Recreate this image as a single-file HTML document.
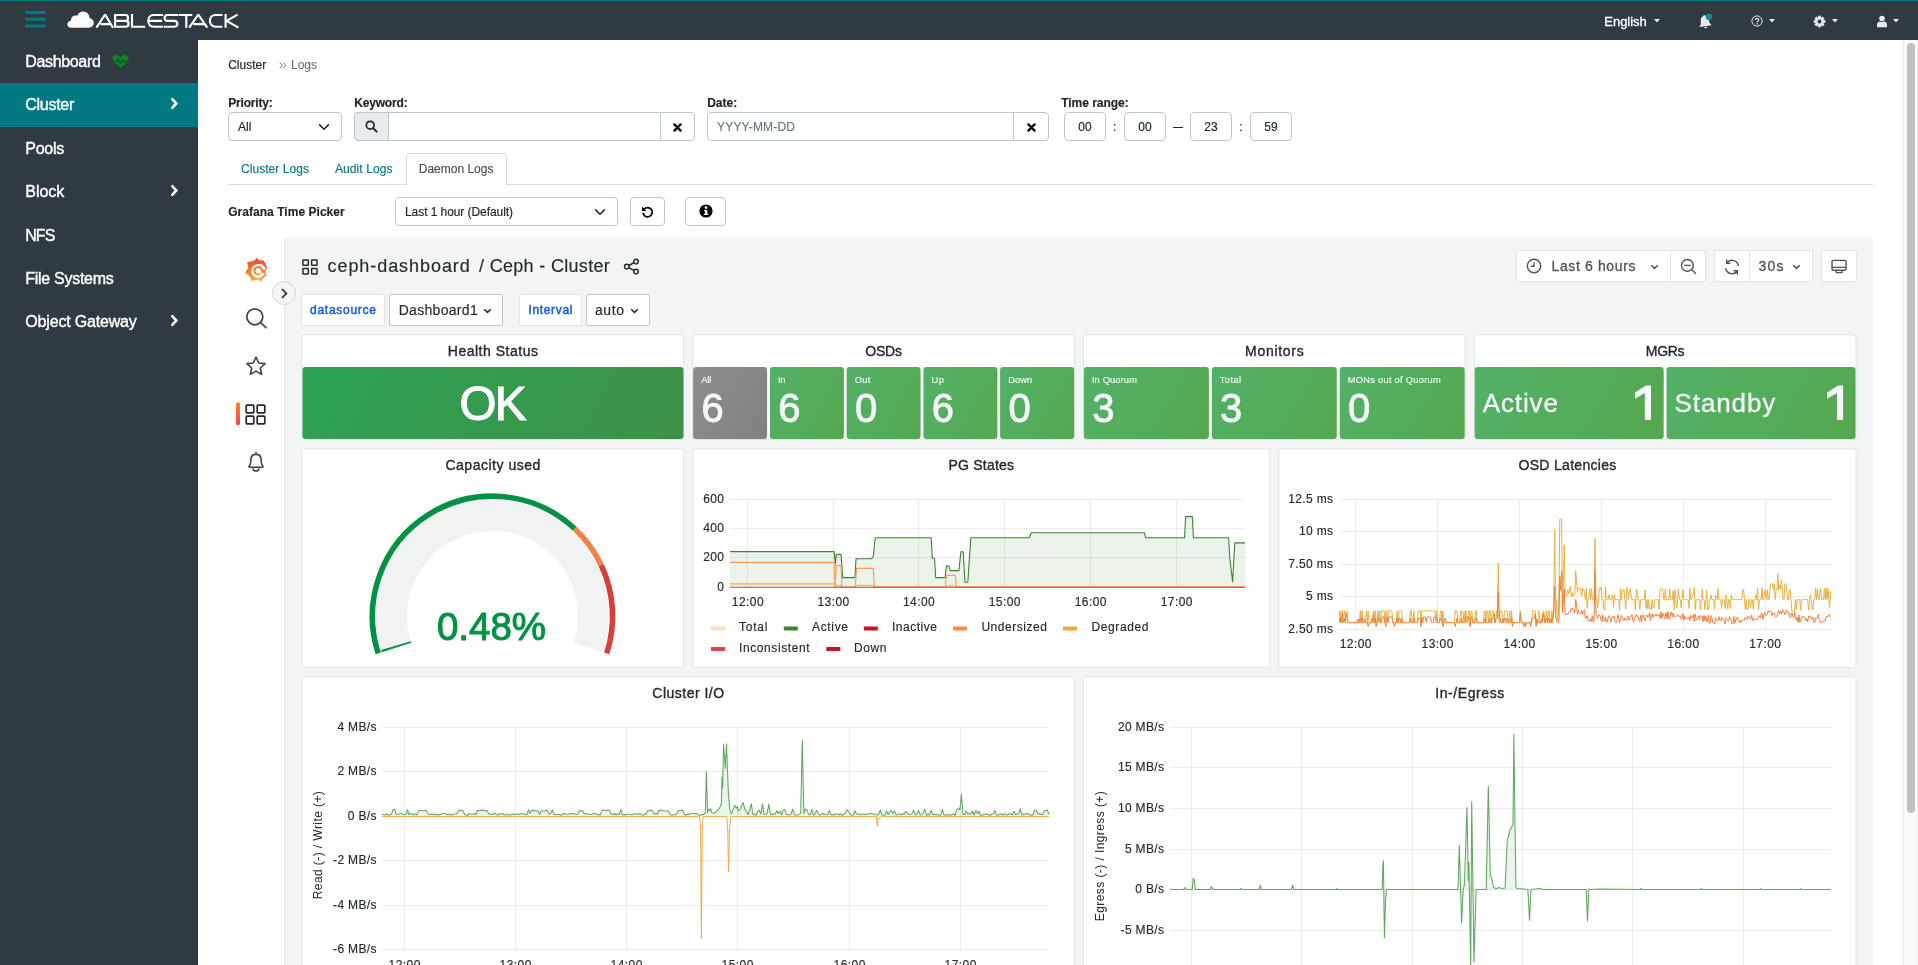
<!DOCTYPE html>
<html><head><meta charset="utf-8"><title>Ceph</title>
<style>
html,body{margin:0;padding:0;}
body{width:1918px;height:965px;overflow:hidden;position:relative;background:#fff;font-family:"Liberation Sans", sans-serif;}
div,svg{box-sizing:border-box;}
#root{position:absolute;left:0;top:0;width:1918px;height:965px;will-change:transform;}
</style></head><body><div id="root">
<div style="position:absolute;left:0px;top:0px;width:1918px;height:40px;background:#2f3a41;"></div>
<div style="position:absolute;left:0px;top:0px;width:1918px;height:1px;background:#007984;"></div>
<div style="position:absolute;left:25px;top:11px;width:21px;height:3.2px;background:#007984;border-radius:1px;"></div>
<div style="position:absolute;left:25px;top:17px;width:21px;height:3.2px;transform:translate(0.00px,0.70px);background:#007984;border-radius:1px;"></div>
<div style="position:absolute;left:25px;top:24px;width:21px;height:3.2px;transform:translate(0.00px,0.40px);background:#007984;border-radius:1px;"></div>
<svg style="position:absolute;left:66px;top:9px;" width="176" height="22" viewBox="0 0 176 22">
<path fill="#fff" d="M5.5 18.8 C2.6 18.8 1.4 16.9 1.4 15.2 C1.4 13.2 2.9 11.6 5 11.4 C5.1 8.6 7 6.6 9.6 6.6 C10.2 6.6 10.7 6.7 11.2 6.9 C12.1 4.3 14.3 2.6 17 2.6 C20.6 2.6 23.4 5.4 23.6 9 C26 9.6 27.8 11.6 27.8 14.1 C27.8 16.8 25.8 18.8 23 18.8 Z"/>
<g fill="none" stroke="#fff" stroke-width="2.15" stroke-linejoin="miter" stroke-linecap="butt">
<path stroke-linejoin="bevel" d="M30.4 18.7 L39.1 5.5 L47 18.7 M34.4 15.1 L44.4 15.1"/>
<path d="M49.1 6 L49.1 17.7 L59.5 17.7 C63.6 17.7 63.6 11.85 59.5 11.85 L49.1 11.85 M59.5 11.85 C62.9 11.85 62.9 6 59.5 6 L48 6"/>
<path d="M66 4.9 L66 17.7 L79.2 17.7"/>
<path d="M97 6 L87.6 6 C80.4 6 80.4 17.7 87.6 17.7 L97 17.7 M82.6 11.85 L96 11.85"/>
<path d="M112.4 6 L101.6 6 C97.6 6 97.6 11.85 101.6 11.85 L108.2 11.85 C112.4 11.85 112.4 17.7 108.2 17.7 L97.8 17.7"/>
<path d="M112.9 6 L126.3 6 M120.3 6 L120.3 18.8"/>
<path stroke-linejoin="bevel" d="M123.2 18.7 L132.3 5.5 L141.2 18.7 M127.4 15.1 L138.2 15.1"/>
<path d="M156.4 6 L149.6 6 C142 6 142 17.7 149.6 17.7 L156.4 17.7"/>
<path stroke-linejoin="bevel" d="M159.6 4.9 L159.6 18.8 M171.6 5.6 L160.6 11.9 L172.4 18.6"/>
</g></svg>
<div style="position:absolute;left:1604.30px;top:14.20px;line-height:15px;font-size:13px;color:#fff;letter-spacing:-0.023px;white-space:pre;-webkit-text-stroke:0.3px #fff;">English</div>
<svg style="position:absolute;left:1653.8px;top:18.8px;" width="6" height="4" viewBox="0 0 6 4"><path d="M0 0 L6 0 L3 3.4 Z" fill="#e6eaed"/></svg>
<svg style="position:absolute;left:1697px;top:14px;" width="16" height="16" viewBox="0 0 16 16"><g transform="rotate(-8 8 8)"><path fill="#e6eaed" d="M7.3 1.8 C7.3 1.2 7.8 .8 8.3 1 C8.7 1.1 8.9 1.5 8.9 1.9 C10.9 2.4 12 4.1 12 6.4 C12 9.2 12.7 10.5 13.9 11.5 L13.9 12.2 L2.1 12.2 L2.1 11.5 C3.3 10.5 4 9.2 4 6.4 C4 4.1 5.2 2.4 7.3 1.8 Z M6.5 12.9 L9.5 12.9 C9.5 13.8 8.8 14.4 8 14.4 C7.2 14.4 6.5 13.8 6.5 12.9 Z"/></g>
<circle cx="11.9" cy="2.7" r="3.2" fill="#0a8c9c"/></svg>
<svg style="position:absolute;left:1751px;top:15.2px;" width="12" height="12" viewBox="0 0 12 12"><circle cx="6" cy="6" r="5.1" fill="none" stroke="#e6eaed" stroke-width="1"/>
<path d="M4.4 4.9 C4.4 2.9 7.7 2.9 7.7 4.9 C7.7 6 6.1 6.1 6.1 7.4" fill="none" stroke="#e6eaed" stroke-width="1.15"/><rect x="5.5" y="8.2" width="1.2" height="1.2" fill="#e6eaed"/></svg>
<svg style="position:absolute;left:1768.8px;top:18.8px;" width="6" height="4" viewBox="0 0 6 4"><path d="M0 0 L6 0 L3 3.4 Z" fill="#e6eaed"/></svg>
<svg style="position:absolute;left:1813.4px;top:14.7px;" width="13" height="13" viewBox="0 0 13 13"><g transform="translate(6.5 6.5)"><circle r="3.2" fill="none" stroke="#e6eaed" stroke-width="2.5"/><rect x="-1.4" y="-5.8" width="2.8" height="2.8" fill="#e6eaed" transform="rotate(0)"/><rect x="-1.4" y="-5.8" width="2.8" height="2.8" fill="#e6eaed" transform="rotate(45)"/><rect x="-1.4" y="-5.8" width="2.8" height="2.8" fill="#e6eaed" transform="rotate(90)"/><rect x="-1.4" y="-5.8" width="2.8" height="2.8" fill="#e6eaed" transform="rotate(135)"/><rect x="-1.4" y="-5.8" width="2.8" height="2.8" fill="#e6eaed" transform="rotate(180)"/><rect x="-1.4" y="-5.8" width="2.8" height="2.8" fill="#e6eaed" transform="rotate(225)"/><rect x="-1.4" y="-5.8" width="2.8" height="2.8" fill="#e6eaed" transform="rotate(270)"/><rect x="-1.4" y="-5.8" width="2.8" height="2.8" fill="#e6eaed" transform="rotate(315)"/></g></svg>
<svg style="position:absolute;left:1831.6px;top:18.8px;" width="6" height="4" viewBox="0 0 6 4"><path d="M0 0 L6 0 L3 3.4 Z" fill="#e6eaed"/></svg>
<svg style="position:absolute;left:1876.4px;top:14.8px;" width="12" height="13" viewBox="0 0 12 13"><circle cx="6" cy="3.5" r="2.8" fill="#e6eaed"/><path d="M1 12.2 L1 9.6 C1 7.5 2.6 6.4 4.1 6.4 C5.2 7.2 6.8 7.2 7.9 6.4 C9.4 6.4 11 7.5 11 9.6 L11 12.2 Z" fill="#e6eaed"/></svg>
<svg style="position:absolute;left:1893.3px;top:18.8px;" width="6" height="4" viewBox="0 0 6 4"><path d="M0 0 L6 0 L3 3.4 Z" fill="#e6eaed"/></svg>
<div style="position:absolute;left:0px;top:40px;width:198px;height:925px;background:#2f3a41;"></div>
<div style="position:absolute;left:0px;top:83px;width:198px;height:44px;background:#007984;"></div>
<div style="position:absolute;left:25.30px;top:53.00px;line-height:17px;font-size:16px;color:#fff;letter-spacing:-0.348px;white-space:pre;-webkit-text-stroke:0.4px #fff;">Dashboard</div>
<div style="position:absolute;left:25.30px;top:96.00px;line-height:17px;font-size:16px;color:#fff;letter-spacing:-0.281px;white-space:pre;-webkit-text-stroke:0.4px #fff;">Cluster</div>
<svg style="position:absolute;left:170px;top:97px;" width="9" height="13" viewBox="0 0 9 13"><path d="M2.3 2.2 L6.3 6.5 L2.3 10.8" fill="none" stroke="#fff" stroke-width="2.6" stroke-linejoin="miter" stroke-linecap="round"/></svg>
<div style="position:absolute;left:25.30px;top:140.00px;line-height:17px;font-size:16px;color:#fff;letter-spacing:-0.258px;white-space:pre;-webkit-text-stroke:0.4px #fff;">Pools</div>
<div style="position:absolute;left:25.30px;top:183.00px;line-height:17px;font-size:16px;color:#fff;letter-spacing:-0.031px;white-space:pre;-webkit-text-stroke:0.4px #fff;">Block</div>
<svg style="position:absolute;left:170px;top:184px;" width="9" height="13" viewBox="0 0 9 13"><path d="M2.3 2.2 L6.3 6.5 L2.3 10.8" fill="none" stroke="#fff" stroke-width="2.6" stroke-linejoin="miter" stroke-linecap="round"/></svg>
<div style="position:absolute;left:25.30px;top:227.00px;line-height:17px;font-size:16px;color:#fff;letter-spacing:-1.000px;white-space:pre;-webkit-text-stroke:0.4px #fff;">NFS</div>
<div style="position:absolute;left:25.30px;top:270.00px;line-height:17px;font-size:16px;color:#fff;letter-spacing:-0.280px;white-space:pre;-webkit-text-stroke:0.4px #fff;">File Systems</div>
<div style="position:absolute;left:25.30px;top:313.00px;line-height:17px;font-size:16px;color:#fff;letter-spacing:-0.179px;white-space:pre;-webkit-text-stroke:0.4px #fff;">Object Gateway</div>
<svg style="position:absolute;left:170px;top:314px;" width="9" height="13" viewBox="0 0 9 13"><path d="M2.3 2.2 L6.3 6.5 L2.3 10.8" fill="none" stroke="#fff" stroke-width="2.6" stroke-linejoin="miter" stroke-linecap="round"/></svg>
<svg style="position:absolute;left:112px;top:54px;" width="17" height="15" viewBox="0 0 17 15"><path fill="#04891f" d="M8.5 14.3 L1.9 7.9 C-.6 5.3 .5 .9 4.3 .9 C6 .9 7.4 1.8 8.5 3.2 C9.6 1.8 11 .9 12.7 .9 C16.5 .9 17.6 5.3 15.1 7.9 Z"/>
<path d="M0 7.6 L4.8 7.6 L6.2 4.8 L8.2 10.4 L10.2 6.2 L11 7.6 L17 7.6" fill="none" stroke="#2f3a41" stroke-width="1.1"/></svg>
<div style="position:absolute;left:228.20px;top:58.00px;line-height:14px;font-size:12px;color:#212529;letter-spacing:-0.003px;white-space:pre;-webkit-text-stroke:0.15px #212529;">Cluster</div>
<svg style="position:absolute;left:278.5px;top:62px;" width="8" height="7" viewBox="0 0 8 7"><path d="M.8 .6 L3.4 3.4 L.8 6.2 M4.2 .6 L6.8 3.4 L4.2 6.2" fill="none" stroke="#6c757d" stroke-width="1"/></svg>
<div style="position:absolute;left:291.00px;top:58.00px;line-height:14px;font-size:12px;color:#6c757d;letter-spacing:-0.010px;white-space:pre;-webkit-text-stroke:0.15px #6c757d;">Logs</div>
<div style="position:absolute;left:228.20px;top:96.00px;line-height:14px;font-size:12px;font-weight:700;color:#212529;letter-spacing:-0.189px;white-space:pre;-webkit-text-stroke:0.15px #212529;">Priority:</div>
<div style="position:absolute;left:354.20px;top:96.00px;line-height:14px;font-size:12px;font-weight:700;color:#212529;letter-spacing:-0.170px;white-space:pre;-webkit-text-stroke:0.15px #212529;">Keyword:</div>
<div style="position:absolute;left:707.20px;top:96.00px;line-height:14px;font-size:12px;font-weight:700;color:#212529;letter-spacing:-0.004px;white-space:pre;-webkit-text-stroke:0.15px #212529;">Date:</div>
<div style="position:absolute;left:1061.20px;top:96.00px;line-height:14px;font-size:12px;font-weight:700;color:#212529;letter-spacing:-0.031px;white-space:pre;-webkit-text-stroke:0.15px #212529;">Time range:</div>
<div style="position:absolute;left:228px;top:112px;width:114px;height:29px;border:1px solid #bbc6d0;border-radius:4px;background:#fff;"></div>
<div style="position:absolute;left:238.00px;top:120.00px;line-height:14px;font-size:12px;color:#212529;white-space:pre;-webkit-text-stroke:0.15px #212529;">All</div>
<svg style="position:absolute;left:318px;top:123px;" width="12" height="8" viewBox="0 0 12 8"><path d="M1.2 1.4 L6 6.2 L10.8 1.4" fill="none" stroke="#212529" stroke-width="1.5"/></svg>
<div style="position:absolute;left:354px;top:112px;width:341px;height:29px;border:1px solid #bbc6d0;border-radius:4px;background:#fff;"></div>
<div style="position:absolute;left:354px;top:112px;width:35px;height:29px;border:1px solid #bbc6d0;border-radius:4px 0 0 4px;background:#e9ecef;"></div>
<div style="position:absolute;left:660px;top:112px;width:1px;height:29px;background:#bbc6d0;"></div>
<svg style="position:absolute;left:364.5px;top:120px;" width="13" height="13" viewBox="0 0 13 13"><circle cx="5.2" cy="5.2" r="3.9" fill="none" stroke="#212529" stroke-width="1.7"/><path d="M8.1 8.1 L11.6 11.6" stroke="#212529" stroke-width="2" stroke-linecap="round"/></svg>
<svg style="position:absolute;left:673px;top:122.5px;" width="9" height="9" viewBox="0 0 9 9"><path d="M1.4 1.4 L7.6 7.6 M7.6 1.4 L1.4 7.6" stroke="#000" stroke-width="2.3" stroke-linecap="round"/></svg>
<div style="position:absolute;left:707px;top:112px;width:342px;height:29px;border:1px solid #bbc6d0;border-radius:4px;background:#fff;"></div>
<div style="position:absolute;left:1013px;top:112px;width:1px;height:29px;background:#bbc6d0;"></div>
<div style="position:absolute;left:717.00px;top:120.00px;line-height:14px;font-size:12px;color:#6c757d;letter-spacing:0.196px;white-space:pre;-webkit-text-stroke:0.15px #6c757d;">YYYY-MM-DD</div>
<svg style="position:absolute;left:1026.7px;top:122.5px;" width="9" height="9" viewBox="0 0 9 9"><path d="M1.4 1.4 L7.6 7.6 M7.6 1.4 L1.4 7.6" stroke="#000" stroke-width="2.3" stroke-linecap="round"/></svg>
<div style="position:absolute;left:1064px;top:112px;width:42px;height:29px;border:1px solid #bbc6d0;border-radius:4px;background:#fff;"></div>
<div style="position:absolute;left:1078.32px;top:120.00px;line-height:14px;font-size:12px;color:#212529;white-space:pre;-webkit-text-stroke:0.15px #212529;">00</div>
<div style="position:absolute;left:1124px;top:112px;width:42px;height:29px;border:1px solid #bbc6d0;border-radius:4px;background:#fff;"></div>
<div style="position:absolute;left:1138.32px;top:120.00px;line-height:14px;font-size:12px;color:#212529;white-space:pre;-webkit-text-stroke:0.15px #212529;">00</div>
<div style="position:absolute;left:1190px;top:112px;width:42px;height:29px;border:1px solid #bbc6d0;border-radius:4px;background:#fff;"></div>
<div style="position:absolute;left:1204.32px;top:120.00px;line-height:14px;font-size:12px;color:#212529;white-space:pre;-webkit-text-stroke:0.15px #212529;">23</div>
<div style="position:absolute;left:1250px;top:112px;width:42px;height:29px;border:1px solid #bbc6d0;border-radius:4px;background:#fff;"></div>
<div style="position:absolute;left:1264.32px;top:120.00px;line-height:14px;font-size:12px;color:#212529;white-space:pre;-webkit-text-stroke:0.15px #212529;">59</div>
<div style="position:absolute;left:1113.03px;top:119.50px;line-height:14px;font-size:12px;color:#212529;white-space:pre;-webkit-text-stroke:0.15px #212529;">:</div>
<div style="position:absolute;left:1239.23px;top:119.50px;line-height:14px;font-size:12px;color:#212529;white-space:pre;-webkit-text-stroke:0.15px #212529;">:</div>
<div style="position:absolute;left:1173px;top:127px;width:10px;height:1px;background:#212529;"></div>
<div style="position:absolute;left:228px;top:184px;width:1645px;height:1px;background:#d5dde3;"></div>
<div style="position:absolute;left:241.00px;top:162.00px;line-height:14px;font-size:12px;color:#00778a;letter-spacing:0.057px;white-space:pre;-webkit-text-stroke:0.15px #00778a;">Cluster Logs</div>
<div style="position:absolute;left:335.00px;top:162.00px;line-height:14px;font-size:12px;color:#00778a;letter-spacing:0.087px;white-space:pre;-webkit-text-stroke:0.15px #00778a;">Audit Logs</div>
<div style="position:absolute;left:406px;top:153px;width:101px;height:32.5px;border:1px solid #d5dde3;border-bottom:none;border-radius:4px 4px 0 0;background:#fff;"></div>
<div style="position:absolute;left:418.80px;top:162.00px;line-height:14px;font-size:12px;color:#495057;letter-spacing:-0.012px;white-space:pre;-webkit-text-stroke:0.15px #495057;">Daemon Logs</div>
<div style="position:absolute;left:228.20px;top:204.80px;line-height:14px;font-size:12px;font-weight:700;color:#212529;letter-spacing:0.036px;white-space:pre;-webkit-text-stroke:0.15px #212529;">Grafana Time Picker</div>
<div style="position:absolute;left:395px;top:197px;width:223px;height:29px;border:1px solid #bbc6d0;border-radius:4px;background:#fff;"></div>
<div style="position:absolute;left:405.00px;top:205.00px;line-height:14px;font-size:12px;color:#212529;letter-spacing:-0.070px;white-space:pre;-webkit-text-stroke:0.15px #212529;">Last 1 hour (Default)</div>
<svg style="position:absolute;left:594.2px;top:207.8px;" width="12" height="8" viewBox="0 0 12 8"><path d="M1.2 1.4 L6 6.2 L10.8 1.4" fill="none" stroke="#212529" stroke-width="1.5"/></svg>
<div style="position:absolute;left:630px;top:197px;width:35px;height:29px;border:1px solid #bbc6d0;border-radius:4px;background:#fff;"></div>
<svg style="position:absolute;left:641px;top:205px;" width="13" height="13" viewBox="0 0 13 13"><path d="M3 4.3 A4.6 4.6 0 1 1 2 7.8" fill="none" stroke="#000" stroke-width="1.7"/><path d="M1 1.6 L1 6 L5.4 6 Z" fill="#000"/></svg>
<div style="position:absolute;left:685px;top:197px;width:41px;height:29px;border:1px solid #bbc6d0;border-radius:4px;background:#fff;"></div>
<svg style="position:absolute;left:698.6px;top:204.3px;" width="14" height="14" viewBox="0 0 14 14"><circle cx="7" cy="7" r="6.6" fill="#000"/><rect x="5.9" y="5.9" width="2.4" height="4.6" fill="#fff"/><rect x="5" y="5.9" width="2" height="1.2" fill="#fff"/><rect x="4.9" y="9.8" width="4.4" height="1.2" fill="#fff"/><circle cx="7" cy="3.6" r="1.35" fill="#fff"/></svg>
<div style="position:absolute;left:1903px;top:40px;width:15px;height:925px;background:#fafafa;border-left:1px solid #e8e8e8;border-right:1px solid #ededed;"></div>
<div style="position:absolute;left:1907px;top:43px;width:8px;height:770px;background:#c1c1c1;border-radius:4px;"></div>
<div style="position:absolute;left:284px;top:238px;width:1589px;height:727px;background:#f3f5f5;border-left:1px solid #e6e8e9;"></div>
<svg style="position:absolute;left:240px;top:254px;" width="32" height="32" viewBox="0 0 32 32"><defs><linearGradient id="gl" gradientUnits="userSpaceOnUse" x1="0" y1="28" x2="0" y2="4"><stop offset="0" stop-color="#fcb828"/><stop offset=".5" stop-color="#f77a27"/><stop offset="1" stop-color="#f3432a"/></linearGradient></defs>
<path fill="url(#gl)" d="M16.9 4 L19.2 6.5 L23.2 6.2 L24.6 8 C25.8 9.6 26.6 11.6 27 14.3 L26.6 15.7 L25.2 15.9 L26.6 21.2 L24 23.2 L20.7 28 L18.5 25.6 L11.4 27 L10.3 22.9 L5.2 18.7 L6.5 15.9 L8.3 14.3 L7.2 8.3 L13.3 7.1 L15.3 5.6 Z"/>
<circle cx="18.1" cy="17" r="5.35" fill="none" stroke="#fff" stroke-width="3.3"/>
<path d="M20.29 10.25 A7.1 7.1 0 0 1 25.13 16.01" fill="none" stroke="#fff" stroke-width="1.3"/>
<path d="M25.4 16.9 L22 17.9" stroke="url(#gl)" stroke-width="3.4"/>
<circle cx="18.2" cy="16.9" r="3" fill="#fff"/>
<path fill="none" stroke="url(#gl)" stroke-width="1.55" d="M22.4 18.2 C22.7 14.6 20.2 12.7 17.9 12.9 C15.4 13.1 13.9 15.4 14.5 17.7 C15.1 19.8 17.3 20.9 19.6 19.9"/></svg>
<div style="position:absolute;left:272px;top:281px;width:24px;height:24px;border-radius:12px;background:#f4f5f5;border:1px solid #d3d6d8;"></div>
<svg style="position:absolute;left:279px;top:286.5px;" width="10" height="13" viewBox="0 0 10 13"><path d="M3 2 L7.4 6.5 L3 11" fill="none" stroke="#24292e" stroke-width="1.7"/></svg>
<svg style="position:absolute;left:244px;top:306px;" width="24" height="24" viewBox="0 0 24 24"><circle cx="10.8" cy="10.8" r="8" fill="none" stroke="#3d4247" stroke-width="1.7"/><path d="M16.6 16.6 L22 21.6" stroke="#3d4247" stroke-width="1.7" stroke-linecap="round"/></svg>
<svg style="position:absolute;left:244px;top:354px;" width="24" height="24" viewBox="0 0 24 24"><polygon points="12.00,3.00 14.65,8.96 21.13,9.63 16.28,13.99 17.64,20.37 12.00,17.10 6.36,20.37 7.72,13.99 2.87,9.63 9.35,8.96" fill="none" stroke="#3d4247" stroke-width="1.6" stroke-linejoin="round"/></svg>
<div style="position:absolute;left:236px;top:402px;width:3.8px;height:23.4px;transform:translate(0.00px,0.30px);background:linear-gradient(#ff8432,#f53f4a);border-radius:2px;"></div>
<svg style="position:absolute;left:245px;top:404px;" width="22" height="22" viewBox="0 0 22 22"><rect x="1.2" y="1.2" width="7.6" height="7.6" rx=".8" fill="none" stroke="#24292e" stroke-width="1.7"/><rect x="1.2" y="12.2" width="7.6" height="7.6" rx=".8" fill="none" stroke="#24292e" stroke-width="1.7"/><rect x="12.2" y="1.2" width="7.6" height="7.6" rx=".8" fill="none" stroke="#24292e" stroke-width="1.7"/><rect x="12.2" y="12.2" width="7.6" height="7.6" rx=".8" fill="none" stroke="#24292e" stroke-width="1.7"/></svg>
<svg style="position:absolute;left:246px;top:451px;" width="20" height="22" viewBox="0 0 20 22"><path d="M10 1.6 L10 3.2 M3.2 16.2 L16.8 16.2 L16.8 14.8 C15.4 13.8 15.2 12.6 15.2 9 C15.2 5.4 13 3.4 10 3.4 C7 3.4 4.8 5.4 4.8 9 C4.8 12.6 4.6 13.8 3.2 14.8 Z M7 18 C7.6 20.6 12.4 20.6 13 18" fill="none" stroke="#3d4247" stroke-width="1.6" stroke-linejoin="round" stroke-linecap="round"/></svg>
<svg style="position:absolute;left:302px;top:258.5px;" width="16" height="16" viewBox="0 0 16 16"><rect x="0.9" y="0.9" width="5.4" height="5.4" rx=".6" fill="none" stroke="#24292e" stroke-width="1.5"/><rect x="0.9" y="9.6" width="5.4" height="5.4" rx=".6" fill="none" stroke="#24292e" stroke-width="1.5"/><rect x="9.6" y="0.9" width="5.4" height="5.4" rx=".6" fill="none" stroke="#24292e" stroke-width="1.5"/><rect x="9.6" y="9.6" width="5.4" height="5.4" rx=".6" fill="none" stroke="#24292e" stroke-width="1.5"/></svg>
<div style="position:absolute;left:327.50px;top:255.50px;line-height:20px;font-size:18px;color:#24292e;letter-spacing:0.938px;white-space:pre;-webkit-text-stroke:0.15px #24292e;">ceph-dashboard</div>
<div style="position:absolute;left:479.00px;top:255.50px;line-height:20px;font-size:18px;color:#24292e;letter-spacing:0.317px;white-space:pre;-webkit-text-stroke:0.15px #24292e;">/ Ceph - Cluster</div>
<svg style="position:absolute;left:623px;top:258px;" width="17" height="17" viewBox="0 0 17 17"><g fill="none" stroke="#24292e" stroke-width="1.5"><circle cx="13" cy="3.6" r="2.3"/><circle cx="3.8" cy="8.6" r="2.3"/><circle cx="13" cy="13.6" r="2.3"/><path d="M5.8 7.5 L11 4.7 M5.8 9.7 L11 12.5"/></g></svg>
<div style="position:absolute;left:1516px;top:250px;width:155px;height:32px;background:#fff;border:1px solid #e2e4e5;border-radius:2px 0 0 2px;"></div>
<div style="position:absolute;left:1670px;top:250px;width:36px;height:32px;background:#fff;border:1px solid #e2e4e5;border-radius:0 2px 2px 0;"></div>
<div style="position:absolute;left:1714px;top:250px;width:36px;height:32px;background:#fff;border:1px solid #e2e4e5;border-radius:2px 0 0 2px;"></div>
<div style="position:absolute;left:1749px;top:250px;width:64px;height:32px;background:#fff;border:1px solid #e2e4e5;border-radius:0 2px 2px 0;"></div>
<div style="position:absolute;left:1821px;top:250px;width:36px;height:32px;background:#fff;border:1px solid #e2e4e5;border-radius:2px;"></div>
<svg style="position:absolute;left:1526px;top:258px;" width="16" height="16" viewBox="0 0 16 16"><circle cx="8" cy="8" r="6.7" fill="none" stroke="#4f5459" stroke-width="1.4"/><path d="M8 4.2 L8 8.3 L4.8 8.3" fill="none" stroke="#4f5459" stroke-width="1.4"/></svg>
<div style="position:absolute;left:1551.50px;top:258.00px;line-height:16px;font-size:14px;color:#4f5459;letter-spacing:0.631px;white-space:pre;-webkit-text-stroke:0.3px #4f5459;">Last 6 hours</div>
<svg style="position:absolute;left:1649.5px;top:263.5px;" width="9" height="6" viewBox="0 0 9 6"><path d="M1.2 1.2 L4.5 4.4 L7.8 1.2" fill="none" stroke="#4f5459" stroke-width="1.5"/></svg>
<svg style="position:absolute;left:1679.5px;top:258px;" width="17" height="17" viewBox="0 0 17 17"><circle cx="7.4" cy="7.4" r="5.9" fill="none" stroke="#4f5459" stroke-width="1.4"/><path d="M4.6 7.4 L10.2 7.4 M11.8 11.8 L15.6 15.6" stroke="#4f5459" stroke-width="1.4" stroke-linecap="round"/></svg>
<svg style="position:absolute;left:1723px;top:257.5px;" width="18" height="18" viewBox="0 0 18 18"><g fill="none" stroke="#4f5459" stroke-width="1.4" stroke-linecap="round" stroke-linejoin="round"><path d="M15.3 7.2 A6.6 6.6 0 0 0 3.6 5 M3.6 2 L3.6 5.3 L6.9 5.3"/><path d="M2.7 10.8 A6.6 6.6 0 0 0 14.4 13 M14.4 16 L14.4 12.7 L11.1 12.7"/></g></svg>
<div style="position:absolute;left:1758.50px;top:258.00px;line-height:16px;font-size:14px;color:#4f5459;letter-spacing:1.211px;white-space:pre;-webkit-text-stroke:0.3px #4f5459;">30s</div>
<svg style="position:absolute;left:1792px;top:263.5px;" width="9" height="6" viewBox="0 0 9 6"><path d="M1.2 1.2 L4.5 4.4 L7.8 1.2" fill="none" stroke="#4f5459" stroke-width="1.5"/></svg>
<svg style="position:absolute;left:1830px;top:257.5px;" width="18" height="18" viewBox="0 0 18 18"><g fill="none" stroke="#4f5459" stroke-width="1.4" stroke-linejoin="round"><rect x="2" y="2.4" width="14" height="9.8" rx="1.2"/><path d="M2 9.4 L16 9.4 M6 14.6 L12 14.6 L12 12.4 M6 14.6 L6 12.4"/></g></svg>
<div style="position:absolute;left:301px;top:294px;width:84px;height:32px;background:#fff;border:1px solid #e2e4e5;border-radius:2px;"></div>
<div style="position:absolute;left:310.00px;top:302.60px;line-height:14px;font-size:12px;color:#1a5edb;letter-spacing:0.736px;white-space:pre;-webkit-text-stroke:0.5px #1a5edb;">datasource</div>
<div style="position:absolute;left:389px;top:294px;width:114px;height:32px;background:#fff;border:1px solid #c4c7c9;border-radius:2px;"></div>
<div style="position:absolute;left:398.70px;top:301.60px;line-height:16px;font-size:14px;color:#24292e;letter-spacing:0.302px;white-space:pre;-webkit-text-stroke:0.15px #24292e;">Dashboard1</div>
<svg style="position:absolute;left:483px;top:307.5px;" width="9" height="6" viewBox="0 0 9 6"><path d="M1.2 1.2 L4.5 4.4 L7.8 1.2" fill="none" stroke="#24292e" stroke-width="1.5"/></svg>
<div style="position:absolute;left:519px;top:294px;width:62.5px;height:32px;background:#fff;border:1px solid #e2e4e5;border-radius:2px;"></div>
<div style="position:absolute;left:528.40px;top:302.60px;line-height:14px;font-size:12px;color:#1a5edb;letter-spacing:0.663px;white-space:pre;-webkit-text-stroke:0.5px #1a5edb;">Interval</div>
<div style="position:absolute;left:586px;top:294px;width:64px;height:32px;background:#fff;border:1px solid #c4c7c9;border-radius:2px;"></div>
<div style="position:absolute;left:595.00px;top:301.60px;line-height:16px;font-size:14px;color:#24292e;letter-spacing:0.583px;white-space:pre;-webkit-text-stroke:0.15px #24292e;">auto</div>
<svg style="position:absolute;left:629.5px;top:307.5px;" width="9" height="6" viewBox="0 0 9 6"><path d="M1.2 1.2 L4.5 4.4 L7.8 1.2" fill="none" stroke="#24292e" stroke-width="1.5"/></svg>
<svg style="position:absolute;left:0;top:0" width="1918" height="965"><rect x="302.00" y="334.75" width="381.75" height="104.75" rx="2.5" fill="#fff" stroke="#e2e4e5" stroke-width="1"/></svg>
<div style="position:absolute;left:447.77px;top:343.00px;line-height:16px;font-size:14px;color:#24292e;letter-spacing:0.511px;white-space:pre;-webkit-text-stroke:0.35px #24292e;">Health Status</div>
<div style="position:absolute;left:302px;top:367px;width:380.75px;height:72px;transform:translate(0.50px,0.00px);background:linear-gradient(120deg,#2da355,#3e9146);border-radius:3px;"></div>
<div style="position:absolute;left:459.38px;top:377.00px;line-height:53px;font-size:47.5px;color:#fff;letter-spacing:-1.641px;white-space:pre;-webkit-text-stroke:1.2px #fff;">OK</div>
<svg style="position:absolute;left:0;top:0" width="1918" height="965"><rect x="692.75" y="334.75" width="381.75" height="104.75" rx="2.5" fill="#fff" stroke="#e2e4e5" stroke-width="1"/></svg>
<div style="position:absolute;left:865.27px;top:343.00px;line-height:16px;font-size:14px;color:#24292e;letter-spacing:-0.215px;white-space:pre;-webkit-text-stroke:0.35px #24292e;">OSDs</div>
<div style="position:absolute;left:693px;top:367px;width:73.8px;height:72px;transform:translate(0.10px,0.00px);background:linear-gradient(120deg,#8d8d8d,#818181);border-radius:3px;"></div>
<div style="position:absolute;left:701.15px;top:375.00px;line-height:10px;font-size:9.3px;color:#f7f8fa;letter-spacing:-0.022px;white-space:pre;-webkit-text-stroke:0.15px #f7f8fa;">All</div>
<div style="position:absolute;left:701.45px;top:386.30px;line-height:44px;font-size:40px;color:#f7f8fa;white-space:pre;-webkit-text-stroke:0.85px #f7f8fa;">6</div>
<div style="position:absolute;left:769px;top:367px;width:73.8px;height:72px;transform:translate(0.90px,0.00px);background:linear-gradient(120deg,#52b268,#55a74e);border-radius:3px;"></div>
<div style="position:absolute;left:777.90px;top:375.00px;line-height:10px;font-size:9.3px;color:#f7f8fa;letter-spacing:-0.266px;white-space:pre;-webkit-text-stroke:0.15px #f7f8fa;">In</div>
<div style="position:absolute;left:778.20px;top:386.30px;line-height:44px;font-size:40px;color:#f7f8fa;white-space:pre;-webkit-text-stroke:0.85px #f7f8fa;">6</div>
<div style="position:absolute;left:846px;top:367px;width:73.8px;height:72px;transform:translate(0.60px,0.00px);background:linear-gradient(120deg,#52b268,#55a74e);border-radius:3px;"></div>
<div style="position:absolute;left:854.65px;top:375.00px;line-height:10px;font-size:9.3px;color:#f7f8fa;letter-spacing:0.300px;white-space:pre;-webkit-text-stroke:0.15px #f7f8fa;">Out</div>
<div style="position:absolute;left:854.95px;top:386.30px;line-height:44px;font-size:40px;color:#f7f8fa;white-space:pre;-webkit-text-stroke:0.85px #f7f8fa;">0</div>
<div style="position:absolute;left:923px;top:367px;width:73.8px;height:72px;transform:translate(0.40px,0.00px);background:linear-gradient(120deg,#52b268,#55a74e);border-radius:3px;"></div>
<div style="position:absolute;left:931.40px;top:375.00px;line-height:10px;font-size:9.3px;color:#f7f8fa;letter-spacing:0.709px;white-space:pre;-webkit-text-stroke:0.15px #f7f8fa;">Up</div>
<div style="position:absolute;left:931.70px;top:386.30px;line-height:44px;font-size:40px;color:#f7f8fa;white-space:pre;-webkit-text-stroke:0.85px #f7f8fa;">6</div>
<div style="position:absolute;left:1000px;top:367px;width:73.8px;height:72px;transform:translate(0.10px,0.00px);background:linear-gradient(120deg,#52b268,#55a74e);border-radius:3px;"></div>
<div style="position:absolute;left:1008.15px;top:375.00px;line-height:10px;font-size:9.3px;color:#f7f8fa;letter-spacing:0.073px;white-space:pre;-webkit-text-stroke:0.15px #f7f8fa;">Down</div>
<div style="position:absolute;left:1008.45px;top:386.30px;line-height:44px;font-size:40px;color:#f7f8fa;white-space:pre;-webkit-text-stroke:0.85px #f7f8fa;">0</div>
<svg style="position:absolute;left:0;top:0" width="1918" height="965"><rect x="1083.50" y="334.75" width="381.75" height="104.75" rx="2.5" fill="#fff" stroke="#e2e4e5" stroke-width="1"/></svg>
<div style="position:absolute;left:1245.03px;top:343.00px;line-height:16px;font-size:14px;color:#24292e;letter-spacing:0.716px;white-space:pre;-webkit-text-stroke:0.35px #24292e;">Monitors</div>
<div style="position:absolute;left:1083px;top:367px;width:124.9px;height:72px;transform:translate(0.90px,0.00px);background:linear-gradient(120deg,#52b268,#55a74e);border-radius:3px;"></div>
<div style="position:absolute;left:1091.90px;top:375.00px;line-height:10px;font-size:9.3px;color:#f7f8fa;letter-spacing:0.135px;white-space:pre;-webkit-text-stroke:0.15px #f7f8fa;">In Quorum</div>
<div style="position:absolute;left:1092.20px;top:386.30px;line-height:44px;font-size:40px;color:#f7f8fa;white-space:pre;-webkit-text-stroke:0.85px #f7f8fa;">3</div>
<div style="position:absolute;left:1211px;top:367px;width:124.9px;height:72px;transform:translate(0.80px,0.00px);background:linear-gradient(120deg,#52b268,#55a74e);border-radius:3px;"></div>
<div style="position:absolute;left:1219.82px;top:375.00px;line-height:10px;font-size:9.3px;color:#f7f8fa;letter-spacing:0.390px;white-space:pre;-webkit-text-stroke:0.15px #f7f8fa;">Total</div>
<div style="position:absolute;left:1220.12px;top:386.30px;line-height:44px;font-size:40px;color:#f7f8fa;white-space:pre;-webkit-text-stroke:0.85px #f7f8fa;">3</div>
<div style="position:absolute;left:1339px;top:367px;width:124.9px;height:72px;transform:translate(0.70px,0.00px);background:linear-gradient(120deg,#52b268,#55a74e);border-radius:3px;"></div>
<div style="position:absolute;left:1347.73px;top:375.00px;line-height:10px;font-size:9.3px;color:#f7f8fa;letter-spacing:0.273px;white-space:pre;-webkit-text-stroke:0.15px #f7f8fa;">MONs out of Quorum</div>
<div style="position:absolute;left:1348.03px;top:386.30px;line-height:44px;font-size:40px;color:#f7f8fa;white-space:pre;-webkit-text-stroke:0.85px #f7f8fa;">0</div>
<svg style="position:absolute;left:0;top:0" width="1918" height="965"><rect x="1474.25" y="334.75" width="381.75" height="104.75" rx="2.5" fill="#fff" stroke="#e2e4e5" stroke-width="1"/></svg>
<div style="position:absolute;left:1645.83px;top:343.00px;line-height:16px;font-size:14px;color:#24292e;letter-spacing:-0.357px;white-space:pre;-webkit-text-stroke:0.35px #24292e;">MGRs</div>
<div style="position:absolute;left:1474px;top:367px;width:188.9px;height:72px;transform:translate(0.70px,0.00px);background:linear-gradient(120deg,#52b268,#55a74e);border-radius:3px;"></div>
<div style="position:absolute;left:1482.65px;top:388.00px;line-height:30px;font-size:26px;color:#f7f8fa;letter-spacing:0.900px;white-space:pre;-webkit-text-stroke:0.3px #f7f8fa;">Active</div>
<svg style="position:absolute;left:0;top:0" width="1918" height="965"><path fill="#f7f8fa" d="M1651 385.4 L1651 420 L1644.8 420 L1644.8 393.0 L1635.1 398.79999999999995 L1635.1 392.59999999999997 L1645.8 385.4 Z"/></svg>
<div style="position:absolute;left:1666px;top:367px;width:188.9px;height:72px;transform:translate(0.50px,0.00px);background:linear-gradient(120deg,#52b268,#55a74e);border-radius:3px;"></div>
<div style="position:absolute;left:1674.53px;top:388.00px;line-height:30px;font-size:26px;color:#f7f8fa;letter-spacing:0.900px;white-space:pre;-webkit-text-stroke:0.3px #f7f8fa;">Standby</div>
<svg style="position:absolute;left:0;top:0" width="1918" height="965"><path fill="#f7f8fa" d="M1843.1 385.4 L1843.1 420 L1836.8999999999999 420 L1836.8999999999999 393.0 L1827.1999999999998 398.79999999999995 L1827.1999999999998 392.59999999999997 L1837.8999999999999 385.4 Z"/></svg>
<svg style="position:absolute;left:0;top:0" width="1918" height="965"><rect x="302.00" y="448.75" width="381.75" height="218.75" rx="2.5" fill="#fff" stroke="#e2e4e5" stroke-width="1"/></svg>
<div style="position:absolute;left:445.38px;top:457.00px;line-height:16px;font-size:14px;color:#24292e;letter-spacing:0.523px;white-space:pre;-webkit-text-stroke:0.35px #24292e;">Capacity used</div>
<svg style="position:absolute;left:0;top:0" width="1918" height="965"><path d="M396.54 647.48 A100.9 100.9 0 1 1 588.46 647.48" fill="none" stroke="#f1f3f3" stroke-width="31"/><path d="M378.28 653.41 A120.1 120.1 0 0 1 574.71 528.75" fill="none" stroke="#039244" stroke-width="5.6"/><path d="M574.71 528.75 A120.1 120.1 0 0 1 601.17 565.16" fill="none" stroke="#f28246" stroke-width="5.6"/><path d="M601.17 565.16 A120.1 120.1 0 0 1 606.72 653.41" fill="none" stroke="#d5403a" stroke-width="5.6"/><path d="M396.54 647.48 A100.9 100.9 0 0 1 395.96 645.63" fill="none" stroke="#039244" stroke-width="31"/></svg>
<div style="position:absolute;left:437.00px;top:605.00px;line-height:43px;font-size:38.5px;color:#039244;letter-spacing:-0.043px;white-space:pre;-webkit-text-stroke:1.0px #039244;">0.48%</div>
<svg style="position:absolute;left:0;top:0" width="1918" height="965"><rect x="692.75" y="448.75" width="577.12" height="218.75" rx="2.5" fill="#fff" stroke="#e2e4e5" stroke-width="1"/></svg>
<div style="position:absolute;left:948.56px;top:457.00px;line-height:16px;font-size:14px;color:#24292e;letter-spacing:0.211px;white-space:pre;-webkit-text-stroke:0.35px #24292e;">PG States</div>
<svg style="position:absolute;left:0;top:0" width="1918" height="965" shape-rendering="crispEdges"><path d="M730 499.5 H1245" stroke="rgba(36,41,46,0.09)" stroke-width="1"/><path d="M730 528.5 H1245" stroke="rgba(36,41,46,0.09)" stroke-width="1"/><path d="M730 557.5 H1245" stroke="rgba(36,41,46,0.09)" stroke-width="1"/><path d="M730 587 H1245" stroke="rgba(36,41,46,0.09)" stroke-width="1"/><path d="M747.5 499.5 V587" stroke="rgba(36,41,46,0.09)" stroke-width="1"/><path d="M833.5 499.5 V587" stroke="rgba(36,41,46,0.09)" stroke-width="1"/><path d="M918.5 499.5 V587" stroke="rgba(36,41,46,0.09)" stroke-width="1"/><path d="M1004.5 499.5 V587" stroke="rgba(36,41,46,0.09)" stroke-width="1"/><path d="M1090.5 499.5 V587" stroke="rgba(36,41,46,0.09)" stroke-width="1"/><path d="M1176.5 499.5 V587" stroke="rgba(36,41,46,0.09)" stroke-width="1"/></svg>
<div style="position:absolute;left:703.27px;top:492.00px;line-height:14px;font-size:12px;color:#24292e;letter-spacing:0.350px;white-space:pre;-webkit-text-stroke:0.15px #24292e;">600</div>
<div style="position:absolute;left:703.27px;top:521.00px;line-height:14px;font-size:12px;color:#24292e;letter-spacing:0.350px;white-space:pre;-webkit-text-stroke:0.15px #24292e;">400</div>
<div style="position:absolute;left:703.27px;top:550.00px;line-height:14px;font-size:12px;color:#24292e;letter-spacing:0.350px;white-space:pre;-webkit-text-stroke:0.15px #24292e;">200</div>
<div style="position:absolute;left:717.31px;top:579.50px;line-height:14px;font-size:12px;color:#24292e;letter-spacing:0.350px;white-space:pre;-webkit-text-stroke:0.15px #24292e;">0</div>
<div style="position:absolute;left:731.78px;top:595.30px;line-height:14px;font-size:12px;color:#24292e;letter-spacing:0.450px;white-space:pre;-webkit-text-stroke:0.15px #24292e;">12:00</div>
<div style="position:absolute;left:817.48px;top:595.30px;line-height:14px;font-size:12px;color:#24292e;letter-spacing:0.450px;white-space:pre;-webkit-text-stroke:0.15px #24292e;">13:00</div>
<div style="position:absolute;left:902.98px;top:595.30px;line-height:14px;font-size:12px;color:#24292e;letter-spacing:0.450px;white-space:pre;-webkit-text-stroke:0.15px #24292e;">14:00</div>
<div style="position:absolute;left:988.68px;top:595.30px;line-height:14px;font-size:12px;color:#24292e;letter-spacing:0.450px;white-space:pre;-webkit-text-stroke:0.15px #24292e;">15:00</div>
<div style="position:absolute;left:1074.68px;top:595.30px;line-height:14px;font-size:12px;color:#24292e;letter-spacing:0.450px;white-space:pre;-webkit-text-stroke:0.15px #24292e;">16:00</div>
<div style="position:absolute;left:1160.68px;top:595.30px;line-height:14px;font-size:12px;color:#24292e;letter-spacing:0.450px;white-space:pre;-webkit-text-stroke:0.15px #24292e;">17:00</div>
<svg style="position:absolute;left:0;top:0" width="1918" height="965"><path d="M730.0 551.6 L834.2 551.6 L835.3 564.0 L836.3 554.4 L841.0 554.4 L842.7 577.6 L854.9 577.6 L856.0 558.8 L871.3 558.8 L873.3 556.6 L875.2 537.7 L931.2 537.7 L932.3 558.2 L934.5 558.2 L935.7 577.6 L945.1 577.6 L946.4 565.9 L948.7 565.9 L950.3 570.6 L958.9 570.6 L960.9 551.8 L963.2 551.8 L965.0 582.3 L967.8 582.3 L970.8 537.7 L1029.3 537.7 L1031.2 532.8 L1144.3 532.8 L1145.7 537.7 L1184.5 537.7 L1185.7 516.6 L1192.3 516.6 L1193.4 537.7 L1228.6 537.7 L1229.8 558.2 L1232.6 581.7 L1234.8 542.9 L1245.0 542.9 L1245.0 587 L730.0 587 Z" fill="rgba(55,135,45,0.10)" stroke="none"/><path d="M730.0 551.6 L834.2 551.6 L835.3 564.0 L836.3 554.4 L841.0 554.4 L842.7 577.6 L854.9 577.6 L856.0 558.8 L871.3 558.8 L873.3 556.6 L875.2 537.7 L931.2 537.7 L932.3 558.2 L934.5 558.2 L935.7 577.6 L945.1 577.6 L946.4 565.9 L948.7 565.9 L950.3 570.6 L958.9 570.6 L960.9 551.8 L963.2 551.8 L965.0 582.3 L967.8 582.3 L970.8 537.7 L1029.3 537.7 L1031.2 532.8 L1144.3 532.8 L1145.7 537.7 L1184.5 537.7 L1185.7 516.6 L1192.3 516.6 L1193.4 537.7 L1228.6 537.7 L1229.8 558.2 L1232.6 581.7 L1234.8 542.9 L1245.0 542.9" fill="none" stroke="#37872d" stroke-width="1.1" stroke-linejoin="round" opacity="1"/><path d="M730.0 583.9 L834.3 583.9 L835.2 587.0 L836.3 585.6 L841.0 585.6 L842.0 587.0 L855.3 587.0 L856.5 585.5 L873.3 585.5 L874.3 587.0 L945.3 587.0 L946.5 586.0 L955.3 586.0 L956.5 587.0 L1245.0 587.0" fill="none" stroke="#e9c27a" stroke-width="1.6" stroke-linejoin="round" opacity="1"/><path d="M730.0 562.4 L834.3 562.4 L835.2 587.0 L836.3 565.6 L841.0 565.6 L842.0 587.0 L855.3 587.0 L856.5 568.4 L873.3 568.4 L874.3 587.0 L945.3 587.0 L946.5 575.4 L955.3 575.4 L956.5 587.0 L1245.0 587.0" fill="none" stroke="#ff9a52" stroke-width="1.1" stroke-linejoin="round" opacity="1"/><path d="M730 587.2 H1245" stroke="#de3a4a" stroke-width="1.1"/></svg>
<div style="position:absolute;left:711px;top:626px;width:14px;height:4px;transform:translate(0.00px,0.50px);background:#fbdac6;"></div>
<div style="position:absolute;left:739.00px;top:620.40px;line-height:14px;font-size:12px;color:#24292e;letter-spacing:0.785px;white-space:pre;-webkit-text-stroke:0.15px #24292e;">Total</div>
<div style="position:absolute;left:783px;top:626px;width:14px;height:4px;transform:translate(0.80px,0.50px);background:#37872d;"></div>
<div style="position:absolute;left:812.00px;top:620.40px;line-height:14px;font-size:12px;color:#24292e;letter-spacing:0.662px;white-space:pre;-webkit-text-stroke:0.15px #24292e;">Active</div>
<div style="position:absolute;left:863px;top:626px;width:14px;height:4px;transform:translate(0.80px,0.50px);background:#c4162a;"></div>
<div style="position:absolute;left:892.00px;top:620.40px;line-height:14px;font-size:12px;color:#24292e;letter-spacing:0.520px;white-space:pre;-webkit-text-stroke:0.15px #24292e;">Inactive</div>
<div style="position:absolute;left:953px;top:626px;width:14px;height:4px;transform:translate(0.00px,0.50px);background:#ff8b4c;"></div>
<div style="position:absolute;left:981.40px;top:620.40px;line-height:14px;font-size:12px;color:#24292e;letter-spacing:0.533px;white-space:pre;-webkit-text-stroke:0.15px #24292e;">Undersized</div>
<div style="position:absolute;left:1063px;top:626px;width:14px;height:4px;transform:translate(0.00px,0.50px);background:#e9ad3c;"></div>
<div style="position:absolute;left:1091.50px;top:620.40px;line-height:14px;font-size:12px;color:#24292e;letter-spacing:0.612px;white-space:pre;-webkit-text-stroke:0.15px #24292e;">Degraded</div>
<div style="position:absolute;left:711px;top:647px;width:14px;height:4px;background:#e8414c;"></div>
<div style="position:absolute;left:739.00px;top:640.90px;line-height:14px;font-size:12px;color:#24292e;letter-spacing:0.587px;white-space:pre;-webkit-text-stroke:0.15px #24292e;">Inconsistent</div>
<div style="position:absolute;left:826px;top:647px;width:14px;height:4px;transform:translate(0.30px,0.00px);background:#c4162a;"></div>
<div style="position:absolute;left:854.00px;top:640.90px;line-height:14px;font-size:12px;color:#24292e;letter-spacing:0.604px;white-space:pre;-webkit-text-stroke:0.15px #24292e;">Down</div>
<svg style="position:absolute;left:0;top:0" width="1918" height="965"><rect x="1278.88" y="448.75" width="577.12" height="218.75" rx="2.5" fill="#fff" stroke="#e2e4e5" stroke-width="1"/></svg>
<div style="position:absolute;left:1518.49px;top:457.00px;line-height:16px;font-size:14px;color:#24292e;letter-spacing:0.311px;white-space:pre;-webkit-text-stroke:0.35px #24292e;">OSD Latencies</div>
<svg style="position:absolute;left:0;top:0" width="1918" height="965" shape-rendering="crispEdges"><path d="M1339 499.5 H1831" stroke="rgba(36,41,46,0.09)" stroke-width="1"/><path d="M1339 531.5 H1831" stroke="rgba(36,41,46,0.09)" stroke-width="1"/><path d="M1339 564.5 H1831" stroke="rgba(36,41,46,0.09)" stroke-width="1"/><path d="M1339 596.5 H1831" stroke="rgba(36,41,46,0.09)" stroke-width="1"/><path d="M1339 629 H1831" stroke="rgba(36,41,46,0.09)" stroke-width="1"/><path d="M1355.5 499.5 V629" stroke="rgba(36,41,46,0.09)" stroke-width="1"/><path d="M1437.5 499.5 V629" stroke="rgba(36,41,46,0.09)" stroke-width="1"/><path d="M1519.5 499.5 V629" stroke="rgba(36,41,46,0.09)" stroke-width="1"/><path d="M1601.5 499.5 V629" stroke="rgba(36,41,46,0.09)" stroke-width="1"/><path d="M1683.5 499.5 V629" stroke="rgba(36,41,46,0.09)" stroke-width="1"/><path d="M1765.5 499.5 V629" stroke="rgba(36,41,46,0.09)" stroke-width="1"/></svg>
<div style="position:absolute;left:1288.21px;top:492.00px;line-height:14px;font-size:12px;color:#24292e;letter-spacing:0.350px;white-space:pre;-webkit-text-stroke:0.15px #24292e;">12.5 ms</div>
<div style="position:absolute;left:1298.91px;top:524.00px;line-height:14px;font-size:12px;color:#24292e;letter-spacing:0.350px;white-space:pre;-webkit-text-stroke:0.15px #24292e;">10 ms</div>
<div style="position:absolute;left:1288.21px;top:557.00px;line-height:14px;font-size:12px;color:#24292e;letter-spacing:0.350px;white-space:pre;-webkit-text-stroke:0.15px #24292e;">7.50 ms</div>
<div style="position:absolute;left:1305.93px;top:589.00px;line-height:14px;font-size:12px;color:#24292e;letter-spacing:0.350px;white-space:pre;-webkit-text-stroke:0.15px #24292e;">5 ms</div>
<div style="position:absolute;left:1288.21px;top:621.50px;line-height:14px;font-size:12px;color:#24292e;letter-spacing:0.350px;white-space:pre;-webkit-text-stroke:0.15px #24292e;">2.50 ms</div>
<div style="position:absolute;left:1339.68px;top:637.30px;line-height:14px;font-size:12px;color:#24292e;letter-spacing:0.450px;white-space:pre;-webkit-text-stroke:0.15px #24292e;">12:00</div>
<div style="position:absolute;left:1421.58px;top:637.30px;line-height:14px;font-size:12px;color:#24292e;letter-spacing:0.450px;white-space:pre;-webkit-text-stroke:0.15px #24292e;">13:00</div>
<div style="position:absolute;left:1503.48px;top:637.30px;line-height:14px;font-size:12px;color:#24292e;letter-spacing:0.450px;white-space:pre;-webkit-text-stroke:0.15px #24292e;">14:00</div>
<div style="position:absolute;left:1585.38px;top:637.30px;line-height:14px;font-size:12px;color:#24292e;letter-spacing:0.450px;white-space:pre;-webkit-text-stroke:0.15px #24292e;">15:00</div>
<div style="position:absolute;left:1667.28px;top:637.30px;line-height:14px;font-size:12px;color:#24292e;letter-spacing:0.450px;white-space:pre;-webkit-text-stroke:0.15px #24292e;">16:00</div>
<div style="position:absolute;left:1749.18px;top:637.30px;line-height:14px;font-size:12px;color:#24292e;letter-spacing:0.450px;white-space:pre;-webkit-text-stroke:0.15px #24292e;">17:00</div>
<svg style="position:absolute;left:0;top:0" width="1918" height="965"><path d="M1339.2 610.8 L1340.1 622.7 L1341.0 610.8 L1341.8 622.7 L1342.7 610.8 L1343.6 610.8 L1344.5 610.8 L1345.4 622.7 L1346.2 610.8 L1347.1 610.8 L1348.0 622.7 L1348.9 622.7 L1349.7 622.7 L1350.6 622.7 L1351.5 622.7 L1352.4 622.7 L1353.3 622.7 L1354.1 622.7 L1355.0 622.7 L1355.9 622.7 L1356.8 622.7 L1357.7 622.7 L1358.5 622.7 L1359.4 622.7 L1360.3 610.8 L1361.2 622.7 L1362.1 610.8 L1362.9 622.7 L1363.8 622.7 L1364.7 622.7 L1365.6 622.7 L1366.5 610.8 L1367.3 622.7 L1368.2 610.8 L1369.1 622.7 L1370.0 622.7 L1370.8 622.7 L1371.7 622.7 L1372.6 622.7 L1373.5 610.8 L1374.4 622.7 L1375.2 610.8 L1376.1 622.7 L1377.0 622.7 L1377.9 610.8 L1378.8 622.7 L1379.6 610.8 L1380.5 622.7 L1381.4 610.8 L1382.3 610.8 L1383.2 610.8 L1384.0 610.8 L1384.9 622.7 L1385.8 610.8 L1386.7 610.8 L1387.5 622.7 L1388.4 610.8 L1389.3 610.8 L1390.2 610.8 L1391.1 610.8 L1391.9 610.8 L1392.8 622.7 L1393.7 622.7 L1394.6 622.7 L1395.5 622.7 L1396.3 622.7 L1397.2 610.8 L1398.1 622.7 L1399.0 610.8 L1399.9 610.8 L1400.7 610.8 L1401.6 610.8 L1402.5 622.7 L1403.4 622.7 L1404.3 622.7 L1405.1 622.7 L1406.0 622.7 L1406.9 622.7 L1407.8 622.7 L1408.6 622.7 L1409.5 622.7 L1410.4 610.8 L1411.3 610.8 L1412.2 622.7 L1413.0 622.7 L1413.9 610.8 L1414.8 622.7 L1415.7 622.7 L1416.6 622.7 L1417.4 622.7 L1418.3 610.8 L1419.2 610.8 L1420.1 610.8 L1421.0 622.7 L1421.8 610.8 L1422.7 610.8 L1423.6 610.8 L1424.5 610.8 L1425.3 610.8 L1426.2 610.8 L1427.1 610.8 L1428.0 610.8 L1428.9 610.8 L1429.7 610.8 L1430.6 610.8 L1431.5 610.8 L1432.4 610.8 L1433.3 610.8 L1434.1 610.8 L1435.0 610.8 L1435.9 622.7 L1436.8 610.8 L1437.7 622.7 L1438.5 622.7 L1439.4 622.7 L1440.3 610.8 L1441.2 610.8 L1442.1 622.7 L1442.9 610.8 L1443.8 622.7 L1444.7 622.7 L1445.6 622.7 L1446.4 622.7 L1447.3 622.7 L1448.2 622.7 L1449.1 622.7 L1450.0 622.7 L1450.8 622.7 L1451.7 622.7 L1452.6 622.7 L1453.5 622.7 L1454.4 622.7 L1455.2 610.8 L1456.1 610.8 L1457.0 610.8 L1457.9 622.7 L1458.8 622.7 L1459.6 622.7 L1460.5 610.8 L1461.4 610.8 L1462.3 622.7 L1463.1 622.7 L1464.0 610.8 L1464.9 622.7 L1465.8 610.8 L1466.7 622.7 L1467.5 622.7 L1468.4 610.8 L1469.3 610.8 L1470.2 622.7 L1471.1 610.8 L1471.9 610.8 L1472.8 622.7 L1473.7 622.7 L1474.6 622.7 L1475.5 610.8 L1476.3 610.8 L1477.2 622.7 L1478.1 622.7 L1479.0 622.7 L1479.9 622.7 L1480.7 622.7 L1481.6 622.7 L1482.5 622.7 L1483.4 622.7 L1484.2 610.8 L1485.1 610.8 L1486.0 622.7 L1486.9 610.8 L1487.8 610.8 L1488.6 622.7 L1489.5 610.8 L1490.4 610.8 L1491.3 622.7 L1492.2 610.8 L1493.0 610.8 L1493.9 610.8 L1494.8 622.7 L1495.7 622.7 L1496.6 610.8 L1497.4 610.8 L1498.3 563.0 L1499.2 622.7 L1500.1 610.8 L1500.9 610.8 L1501.8 610.8 L1502.7 622.7 L1503.6 622.7 L1504.5 610.8 L1505.3 610.8 L1506.2 610.8 L1507.1 610.8 L1508.0 622.7 L1508.9 622.7 L1509.7 610.8 L1510.6 622.7 L1511.5 610.8 L1512.4 622.7 L1513.3 622.7 L1514.1 622.7 L1515.0 622.7 L1515.9 622.7 L1516.8 622.7 L1517.7 622.7 L1518.5 622.7 L1519.4 622.7 L1520.3 610.8 L1521.2 622.7 L1522.0 622.7 L1522.9 622.7 L1523.8 622.7 L1524.7 622.7 L1525.6 622.7 L1526.4 622.7 L1527.3 622.7 L1528.2 622.7 L1529.1 622.7 L1530.0 622.7 L1530.8 622.7 L1531.7 622.7 L1532.6 610.8 L1533.5 610.8 L1534.4 610.8 L1535.2 610.8 L1536.1 622.7 L1537.0 622.7 L1537.9 622.7 L1538.7 610.8 L1539.6 622.7 L1540.5 622.7 L1541.4 622.7 L1542.3 622.7 L1543.1 610.8 L1544.0 610.8 L1544.9 622.7 L1545.8 622.7 L1546.7 610.8 L1547.5 622.7 L1548.4 610.8 L1549.3 610.8 L1550.2 622.7 L1551.1 622.7 L1551.9 610.8 L1552.8 622.7 L1553.7 609.4 L1554.6 529.3 L1555.5 599.6 L1556.3 599.6 L1557.2 620.1 L1558.1 620.1 L1559.0 589.8 L1559.8 518.9 L1560.7 518.9 L1561.6 518.9 L1562.5 608.4 L1563.4 583.8 L1564.2 544.8 L1565.1 590.0 L1566.0 596.8 L1566.9 596.1 L1567.8 590.1 L1568.6 593.8 L1569.5 590.9 L1570.4 586.4 L1571.3 596.7 L1572.2 592.5 L1573.0 596.6 L1573.9 595.8 L1574.8 595.2 L1575.7 570.8 L1576.5 581.2 L1577.4 591.7 L1578.3 587.4 L1579.2 588.6 L1580.1 588.1 L1580.9 592.8 L1581.8 596.3 L1582.7 588.0 L1583.6 590.2 L1584.5 592.3 L1585.3 599.6 L1586.2 588.5 L1587.1 608.4 L1588.0 599.6 L1588.9 599.6 L1589.7 589.2 L1590.6 599.6 L1591.5 588.4 L1592.4 599.6 L1593.3 599.6 L1594.1 599.6 L1595.0 538.3 L1595.9 599.6 L1596.8 599.6 L1597.6 607.8 L1598.5 599.6 L1599.4 587.8 L1600.3 589.5 L1601.2 587.4 L1602.0 599.6 L1602.9 599.6 L1603.8 609.7 L1604.7 610.3 L1605.6 587.3 L1606.4 599.6 L1607.3 599.6 L1608.2 599.6 L1609.1 594.8 L1610.0 599.6 L1610.8 599.6 L1611.7 599.6 L1612.6 594.8 L1613.5 607.8 L1614.3 594.8 L1615.2 599.6 L1616.1 599.6 L1617.0 599.6 L1617.9 599.6 L1618.7 599.6 L1619.6 610.4 L1620.5 588.5 L1621.4 599.6 L1622.3 590.0 L1623.1 590.9 L1624.0 589.5 L1624.9 599.6 L1625.8 608.8 L1626.7 587.3 L1627.5 590.5 L1628.4 599.6 L1629.3 594.8 L1630.2 588.4 L1631.1 594.8 L1631.9 599.6 L1632.8 599.6 L1633.7 599.6 L1634.6 599.6 L1635.4 610.2 L1636.3 588.8 L1637.2 590.1 L1638.1 599.6 L1639.0 599.6 L1639.8 609.6 L1640.7 599.6 L1641.6 599.6 L1642.5 599.6 L1643.4 599.6 L1644.2 599.6 L1645.1 590.0 L1646.0 608.4 L1646.9 599.6 L1647.8 608.9 L1648.6 599.6 L1649.5 608.7 L1650.4 608.1 L1651.3 609.8 L1652.1 599.6 L1653.0 608.1 L1653.9 608.0 L1654.8 599.6 L1655.7 599.6 L1656.5 599.6 L1657.4 599.6 L1658.3 599.6 L1659.2 609.8 L1660.1 589.0 L1660.9 589.0 L1661.8 589.0 L1662.7 589.0 L1663.6 599.6 L1664.5 599.6 L1665.3 589.0 L1666.2 599.6 L1667.1 599.6 L1668.0 599.6 L1668.9 599.6 L1669.7 589.0 L1670.6 599.6 L1671.5 599.6 L1672.4 599.6 L1673.2 590.5 L1674.1 609.6 L1675.0 589.9 L1675.9 599.6 L1676.8 607.9 L1677.6 599.6 L1678.5 589.3 L1679.4 599.6 L1680.3 599.6 L1681.2 608.1 L1682.0 599.6 L1682.9 590.1 L1683.8 599.6 L1684.7 599.6 L1685.6 599.6 L1686.4 599.6 L1687.3 599.6 L1688.2 599.6 L1689.1 608.6 L1689.9 588.4 L1690.8 599.6 L1691.7 599.6 L1692.6 594.8 L1693.5 594.8 L1694.3 587.4 L1695.2 609.7 L1696.1 599.6 L1697.0 599.6 L1697.9 599.6 L1698.7 599.6 L1699.6 599.6 L1700.5 610.0 L1701.4 599.6 L1702.3 589.2 L1703.1 599.6 L1704.0 599.6 L1704.9 609.9 L1705.8 599.6 L1706.7 590.3 L1707.5 609.0 L1708.4 609.9 L1709.3 599.6 L1710.2 599.6 L1711.0 594.8 L1711.9 599.6 L1712.8 599.6 L1713.7 599.6 L1714.6 609.4 L1715.4 594.8 L1716.3 599.6 L1717.2 599.6 L1718.1 588.6 L1719.0 599.6 L1719.8 599.6 L1720.7 599.6 L1721.6 608.5 L1722.5 599.6 L1723.4 599.6 L1724.2 599.6 L1725.1 608.7 L1726.0 594.8 L1726.9 599.6 L1727.7 609.3 L1728.6 599.6 L1729.5 599.6 L1730.4 608.7 L1731.3 594.8 L1732.1 599.6 L1733.0 599.6 L1733.9 599.6 L1734.8 599.6 L1735.7 599.6 L1736.5 599.6 L1737.4 599.6 L1738.3 599.6 L1739.2 599.6 L1740.1 599.6 L1740.9 599.6 L1741.8 599.6 L1742.7 589.8 L1743.6 589.3 L1744.5 599.6 L1745.3 609.8 L1746.2 599.6 L1747.1 608.3 L1748.0 610.0 L1748.8 599.6 L1749.7 599.6 L1750.6 607.9 L1751.5 599.6 L1752.4 599.6 L1753.2 609.0 L1754.1 599.6 L1755.0 599.6 L1755.9 594.8 L1756.8 599.6 L1757.6 588.1 L1758.5 609.6 L1759.4 599.6 L1760.3 599.6 L1761.2 599.6 L1762.0 587.7 L1762.9 599.6 L1763.8 599.6 L1764.7 590.9 L1765.5 589.6 L1766.4 599.6 L1767.3 589.6 L1768.2 599.6 L1769.1 599.6 L1769.9 589.6 L1770.8 583.8 L1771.7 583.8 L1772.6 583.8 L1773.5 589.6 L1774.3 583.8 L1775.2 599.6 L1776.1 589.6 L1777.0 589.6 L1777.9 573.4 L1778.7 589.6 L1779.6 585.1 L1780.5 589.6 L1781.4 579.9 L1782.3 589.6 L1783.1 599.6 L1784.0 599.6 L1784.9 583.8 L1785.8 583.8 L1786.6 589.6 L1787.5 599.6 L1788.4 599.6 L1789.3 589.6 L1790.2 589.6 L1791.0 599.6 L1791.9 611.7 L1792.8 611.7 L1793.7 611.7 L1794.6 611.7 L1795.4 599.6 L1796.3 609.6 L1797.2 599.6 L1798.1 599.6 L1799.0 599.6 L1799.8 599.6 L1800.7 610.4 L1801.6 599.6 L1802.5 599.6 L1803.3 599.6 L1804.2 599.6 L1805.1 599.6 L1806.0 599.6 L1806.9 599.6 L1807.7 599.6 L1808.6 610.3 L1809.5 599.6 L1810.4 594.8 L1811.3 599.6 L1812.1 609.6 L1813.0 609.3 L1813.9 599.6 L1814.8 599.6 L1815.7 587.8 L1816.5 599.6 L1817.4 589.4 L1818.3 599.6 L1819.2 599.6 L1820.1 588.4 L1820.9 590.8 L1821.8 599.6 L1822.7 599.6 L1823.6 599.6 L1824.4 588.1 L1825.3 599.6 L1826.2 587.9 L1827.1 599.6 L1828.0 588.5 L1828.8 599.6 L1829.7 607.9 L1830.6 590.9" fill="none" stroke="#e9b23f" stroke-width="1" stroke-linejoin="round" opacity="1"/><path d="M1339.2 618.2 L1340.1 622.7 L1341.0 618.2 L1341.8 622.7 L1342.7 613.6 L1343.6 622.7 L1344.5 618.2 L1345.4 622.7 L1346.2 613.6 L1347.1 618.2 L1348.0 622.7 L1348.9 622.7 L1349.7 622.7 L1350.6 622.7 L1351.5 622.7 L1352.4 622.7 L1353.3 622.7 L1354.1 622.7 L1355.0 622.7 L1355.9 622.7 L1356.8 622.7 L1357.7 618.8 L1358.5 622.7 L1359.4 618.8 L1360.3 618.2 L1361.2 622.7 L1362.1 618.2 L1362.9 622.7 L1363.8 622.7 L1364.7 618.8 L1365.6 622.7 L1366.5 622.7 L1367.3 622.7 L1368.2 626.6 L1369.1 622.7 L1370.0 622.7 L1370.8 622.7 L1371.7 618.8 L1372.6 622.7 L1373.5 613.6 L1374.4 622.7 L1375.2 618.2 L1376.1 626.6 L1377.0 622.7 L1377.9 618.2 L1378.8 618.8 L1379.6 618.2 L1380.5 622.7 L1381.4 622.7 L1382.3 616.9 L1383.2 616.9 L1384.0 616.9 L1384.9 622.7 L1385.8 626.6 L1386.7 616.9 L1387.5 616.9 L1388.4 622.7 L1389.3 616.9 L1390.2 616.9 L1391.1 616.9 L1391.9 616.9 L1392.8 622.7 L1393.7 622.7 L1394.6 626.6 L1395.5 622.7 L1396.3 622.7 L1397.2 618.2 L1398.1 622.7 L1399.0 618.2 L1399.9 618.2 L1400.7 622.7 L1401.6 618.2 L1402.5 622.7 L1403.4 622.7 L1404.3 622.7 L1405.1 622.7 L1406.0 622.7 L1406.9 622.7 L1407.8 622.7 L1408.6 622.7 L1409.5 622.7 L1410.4 618.2 L1411.3 622.7 L1412.2 622.7 L1413.0 622.7 L1413.9 618.2 L1414.8 622.7 L1415.7 622.7 L1416.6 622.7 L1417.4 622.7 L1418.3 618.2 L1419.2 618.2 L1420.1 618.2 L1421.0 626.6 L1421.8 616.9 L1422.7 622.7 L1423.6 616.9 L1424.5 616.9 L1425.3 616.9 L1426.2 622.7 L1427.1 616.9 L1428.0 616.9 L1428.9 616.9 L1429.7 616.9 L1430.6 616.9 L1431.5 622.7 L1432.4 622.7 L1433.3 622.7 L1434.1 616.9 L1435.0 616.9 L1435.9 616.9 L1436.8 618.2 L1437.7 622.7 L1438.5 622.7 L1439.4 622.7 L1440.3 618.2 L1441.2 618.2 L1442.1 622.7 L1442.9 626.6 L1443.8 622.7 L1444.7 618.8 L1445.6 618.8 L1446.4 622.7 L1447.3 622.7 L1448.2 622.7 L1449.1 622.7 L1450.0 622.7 L1450.8 622.7 L1451.7 622.7 L1452.6 622.7 L1453.5 622.7 L1454.4 622.7 L1455.2 626.6 L1456.1 622.7 L1457.0 618.2 L1457.9 622.7 L1458.8 622.7 L1459.6 622.7 L1460.5 622.7 L1461.4 618.2 L1462.3 622.7 L1463.1 622.7 L1464.0 622.7 L1464.9 622.7 L1465.8 618.2 L1466.7 616.9 L1467.5 616.9 L1468.4 616.9 L1469.3 622.7 L1470.2 626.6 L1471.1 616.9 L1471.9 616.9 L1472.8 622.7 L1473.7 622.7 L1474.6 622.7 L1475.5 618.2 L1476.3 618.2 L1477.2 622.7 L1478.1 622.7 L1479.0 622.7 L1479.9 622.7 L1480.7 622.7 L1481.6 622.7 L1482.5 622.7 L1483.4 622.7 L1484.2 622.7 L1485.1 618.2 L1486.0 622.7 L1486.9 622.7 L1487.8 622.7 L1488.6 622.7 L1489.5 618.2 L1490.4 622.7 L1491.3 622.7 L1492.2 618.2 L1493.0 618.2 L1493.9 613.6 L1494.8 622.7 L1495.7 618.8 L1496.6 618.2 L1497.4 618.2 L1498.3 591.6 L1499.2 618.8 L1500.1 618.2 L1500.9 622.7 L1501.8 622.7 L1502.7 618.8 L1503.6 622.7 L1504.5 618.2 L1505.3 618.2 L1506.2 622.7 L1507.1 618.2 L1508.0 618.8 L1508.9 622.7 L1509.7 622.7 L1510.6 622.7 L1511.5 618.2 L1512.4 626.6 L1513.3 622.7 L1514.1 622.7 L1515.0 622.7 L1515.9 622.7 L1516.8 622.7 L1517.7 622.7 L1518.5 622.7 L1519.4 622.7 L1520.3 613.6 L1521.2 622.7 L1522.0 622.7 L1522.9 622.7 L1523.8 626.6 L1524.7 622.7 L1525.6 626.6 L1526.4 622.7 L1527.3 622.7 L1528.2 622.7 L1529.1 622.7 L1530.0 622.7 L1530.8 626.6 L1531.7 618.8 L1532.6 618.2 L1533.5 618.2 L1534.4 618.2 L1535.2 613.6 L1536.1 626.6 L1537.0 618.8 L1537.9 622.7 L1538.7 622.7 L1539.6 622.7 L1540.5 622.7 L1541.4 618.8 L1542.3 622.7 L1543.1 613.6 L1544.0 618.2 L1544.9 622.7 L1545.8 618.8 L1546.7 618.2 L1547.5 622.7 L1548.4 618.2 L1549.3 622.7 L1550.2 618.8 L1551.1 622.7 L1551.9 618.2 L1552.8 618.8 L1553.7 612.5 L1554.6 586.4 L1555.5 615.4 L1556.3 620.1 L1557.2 622.7 L1558.1 622.7 L1559.0 620.0 L1559.8 576.0 L1560.7 590.3 L1561.6 570.8 L1562.5 613.0 L1563.4 601.9 L1564.2 589.0 L1565.1 613.3 L1566.0 614.9 L1566.9 614.1 L1567.8 614.2 L1568.6 612.5 L1569.5 612.1 L1570.4 612.1 L1571.3 607.9 L1572.2 608.0 L1573.0 610.6 L1573.9 610.1 L1574.8 612.7 L1575.7 599.3 L1576.5 604.5 L1577.4 614.5 L1578.3 610.1 L1579.2 613.2 L1580.1 613.5 L1580.9 614.0 L1581.8 610.5 L1582.7 614.0 L1583.6 612.5 L1584.5 609.8 L1585.3 618.4 L1586.2 618.0 L1587.1 615.6 L1588.0 620.8 L1588.9 621.5 L1589.7 621.6 L1590.6 618.1 L1591.5 621.8 L1592.4 615.9 L1593.3 622.1 L1594.1 619.4 L1595.0 570.8 L1595.9 614.2 L1596.8 615.8 L1597.6 618.6 L1598.5 615.0 L1599.4 614.9 L1600.3 616.4 L1601.2 620.6 L1602.0 621.7 L1602.9 615.1 L1603.8 618.7 L1604.7 621.5 L1605.6 617.2 L1606.4 621.6 L1607.3 622.1 L1608.2 617.6 L1609.1 615.6 L1610.0 618.1 L1610.8 622.2 L1611.7 617.7 L1612.6 616.3 L1613.5 618.1 L1614.3 616.5 L1615.2 621.6 L1616.1 622.7 L1617.0 620.9 L1617.9 614.6 L1618.7 617.3 L1619.6 622.7 L1620.5 619.3 L1621.4 615.3 L1622.3 617.3 L1623.1 619.9 L1624.0 620.9 L1624.9 617.8 L1625.8 618.7 L1626.7 620.7 L1627.5 617.3 L1628.4 616.0 L1629.3 620.4 L1630.2 617.8 L1631.1 617.0 L1631.9 614.5 L1632.8 620.3 L1633.7 622.0 L1634.6 618.9 L1635.4 615.6 L1636.3 614.2 L1637.2 617.0 L1638.1 616.7 L1639.0 620.6 L1639.8 621.7 L1640.7 615.2 L1641.6 621.8 L1642.5 615.3 L1643.4 615.2 L1644.2 619.5 L1645.1 621.0 L1646.0 615.3 L1646.9 615.0 L1647.8 617.2 L1648.6 616.4 L1649.5 612.5 L1650.4 620.5 L1651.3 614.2 L1652.1 614.0 L1653.0 617.5 L1653.9 614.8 L1654.8 614.5 L1655.7 616.1 L1656.5 614.0 L1657.4 616.2 L1658.3 615.0 L1659.2 614.5 L1660.1 618.5 L1660.9 611.7 L1661.8 618.4 L1662.7 613.7 L1663.6 613.6 L1664.5 619.0 L1665.3 616.4 L1666.2 612.5 L1667.1 618.9 L1668.0 611.6 L1668.9 618.5 L1669.7 619.2 L1670.6 612.5 L1671.5 612.4 L1672.4 617.1 L1673.2 613.1 L1674.1 616.0 L1675.0 617.2 L1675.9 616.5 L1676.8 615.4 L1677.6 614.5 L1678.5 616.1 L1679.4 617.0 L1680.3 615.4 L1681.2 619.3 L1682.0 618.7 L1682.9 613.7 L1683.8 620.3 L1684.7 616.3 L1685.6 619.0 L1686.4 617.7 L1687.3 618.6 L1688.2 618.5 L1689.1 616.7 L1689.9 620.4 L1690.8 615.3 L1691.7 616.0 L1692.6 618.1 L1693.5 614.0 L1694.3 621.5 L1695.2 614.1 L1696.1 618.7 L1697.0 620.1 L1697.9 617.7 L1698.7 615.9 L1699.6 619.5 L1700.5 615.4 L1701.4 616.4 L1702.3 616.2 L1703.1 621.9 L1704.0 615.5 L1704.9 620.6 L1705.8 616.1 L1706.7 621.3 L1707.5 622.2 L1708.4 615.3 L1709.3 622.9 L1710.2 623.0 L1711.0 615.5 L1711.9 617.7 L1712.8 622.4 L1713.7 623.3 L1714.6 624.0 L1715.4 617.5 L1716.3 620.1 L1717.2 620.5 L1718.1 621.0 L1719.0 616.7 L1719.8 619.6 L1720.7 621.0 L1721.6 617.1 L1722.5 618.6 L1723.4 618.8 L1724.2 620.8 L1725.1 623.8 L1726.0 617.9 L1726.9 619.2 L1727.7 620.7 L1728.6 621.1 L1729.5 616.6 L1730.4 617.9 L1731.3 620.3 L1732.1 624.1 L1733.0 623.0 L1733.9 616.3 L1734.8 623.4 L1735.7 619.6 L1736.5 619.7 L1737.4 616.9 L1738.3 620.4 L1739.2 622.1 L1740.1 620.4 L1740.9 622.6 L1741.8 620.5 L1742.7 620.1 L1743.6 619.8 L1744.5 620.2 L1745.3 616.8 L1746.2 618.5 L1747.1 619.6 L1748.0 616.1 L1748.8 617.2 L1749.7 617.7 L1750.6 619.4 L1751.5 615.3 L1752.4 618.2 L1753.2 621.0 L1754.1 618.9 L1755.0 619.5 L1755.9 619.5 L1756.8 619.9 L1757.6 619.0 L1758.5 617.2 L1759.4 615.7 L1760.3 617.9 L1761.2 613.6 L1762.0 613.1 L1762.9 619.5 L1763.8 615.2 L1764.7 612.4 L1765.5 615.4 L1766.4 615.5 L1767.3 614.6 L1768.2 610.7 L1769.1 612.3 L1769.9 611.8 L1770.8 610.8 L1771.7 615.8 L1772.6 613.0 L1773.5 613.8 L1774.3 612.8 L1775.2 616.3 L1776.1 617.0 L1777.0 616.3 L1777.9 613.3 L1778.7 610.1 L1779.6 613.5 L1780.5 611.8 L1781.4 614.3 L1782.3 609.3 L1783.1 612.1 L1784.0 611.7 L1784.9 614.7 L1785.8 613.1 L1786.6 609.8 L1787.5 612.2 L1788.4 614.4 L1789.3 613.0 L1790.2 618.0 L1791.0 616.2 L1791.9 612.8 L1792.8 616.5 L1793.7 617.7 L1794.6 611.8 L1795.4 615.9 L1796.3 620.1 L1797.2 617.3 L1798.1 622.4 L1799.0 615.1 L1799.8 622.3 L1800.7 621.1 L1801.6 617.5 L1802.5 616.0 L1803.3 617.5 L1804.2 617.3 L1805.1 617.6 L1806.0 620.9 L1806.9 618.8 L1807.7 621.8 L1808.6 616.1 L1809.5 617.1 L1810.4 615.7 L1811.3 617.9 L1812.1 619.1 L1813.0 617.2 L1813.9 622.2 L1814.8 622.4 L1815.7 617.8 L1816.5 618.9 L1817.4 617.6 L1818.3 614.3 L1819.2 619.2 L1820.1 620.9 L1820.9 622.7 L1821.8 621.7 L1822.7 622.0 L1823.6 621.6 L1824.4 620.6 L1825.3 621.1 L1826.2 616.6 L1827.1 616.5 L1828.0 616.6 L1828.8 614.7 L1829.7 616.6 L1830.6 617.1" fill="none" stroke="#f2803c" stroke-width="1" stroke-linejoin="round" opacity="1"/></svg>
<svg style="position:absolute;left:0;top:0" width="1918" height="965"><rect x="302.00" y="676.75" width="772.50" height="299.00" rx="2.5" fill="#fff" stroke="#e2e4e5" stroke-width="1"/></svg>
<div style="position:absolute;left:652.35px;top:685.00px;line-height:16px;font-size:14px;color:#24292e;letter-spacing:0.489px;white-space:pre;-webkit-text-stroke:0.35px #24292e;">Cluster I/O</div>
<svg style="position:absolute;left:0;top:0" width="1918" height="965" shape-rendering="crispEdges"><path d="M382 727.5 H1049" stroke="rgba(36,41,46,0.09)" stroke-width="1"/><path d="M382 771.5 H1049" stroke="rgba(36,41,46,0.09)" stroke-width="1"/><path d="M382 816.5 H1049" stroke="rgba(36,41,46,0.09)" stroke-width="1"/><path d="M382 860.5 H1049" stroke="rgba(36,41,46,0.09)" stroke-width="1"/><path d="M382 905.5 H1049" stroke="rgba(36,41,46,0.09)" stroke-width="1"/><path d="M382 949.5 H1049" stroke="rgba(36,41,46,0.09)" stroke-width="1"/><path d="M404.5 727.5 V949.5" stroke="rgba(36,41,46,0.09)" stroke-width="1"/><path d="M515.5 727.5 V949.5" stroke="rgba(36,41,46,0.09)" stroke-width="1"/><path d="M626.5 727.5 V949.5" stroke="rgba(36,41,46,0.09)" stroke-width="1"/><path d="M737.5 727.5 V949.5" stroke="rgba(36,41,46,0.09)" stroke-width="1"/><path d="M849.5 727.5 V949.5" stroke="rgba(36,41,46,0.09)" stroke-width="1"/><path d="M960.5 727.5 V949.5" stroke="rgba(36,41,46,0.09)" stroke-width="1"/></svg>
<div style="position:absolute;left:337.41px;top:720.00px;line-height:14px;font-size:12px;color:#24292e;letter-spacing:0.350px;white-space:pre;-webkit-text-stroke:0.15px #24292e;">4 MB/s</div>
<div style="position:absolute;left:337.41px;top:764.00px;line-height:14px;font-size:12px;color:#24292e;letter-spacing:0.350px;white-space:pre;-webkit-text-stroke:0.15px #24292e;">2 MB/s</div>
<div style="position:absolute;left:347.74px;top:809.00px;line-height:14px;font-size:12px;color:#24292e;letter-spacing:0.350px;white-space:pre;-webkit-text-stroke:0.15px #24292e;">0 B/s</div>
<div style="position:absolute;left:333.06px;top:853.00px;line-height:14px;font-size:12px;color:#24292e;letter-spacing:0.350px;white-space:pre;-webkit-text-stroke:0.15px #24292e;">-2 MB/s</div>
<div style="position:absolute;left:333.06px;top:898.00px;line-height:14px;font-size:12px;color:#24292e;letter-spacing:0.350px;white-space:pre;-webkit-text-stroke:0.15px #24292e;">-4 MB/s</div>
<div style="position:absolute;left:333.06px;top:942.00px;line-height:14px;font-size:12px;color:#24292e;letter-spacing:0.350px;white-space:pre;-webkit-text-stroke:0.15px #24292e;">-6 MB/s</div>
<div style="position:absolute;left:388.58px;top:958.30px;line-height:14px;font-size:12px;color:#24292e;letter-spacing:0.450px;white-space:pre;-webkit-text-stroke:0.15px #24292e;">12:00</div>
<div style="position:absolute;left:499.58px;top:958.30px;line-height:14px;font-size:12px;color:#24292e;letter-spacing:0.450px;white-space:pre;-webkit-text-stroke:0.15px #24292e;">13:00</div>
<div style="position:absolute;left:610.58px;top:958.30px;line-height:14px;font-size:12px;color:#24292e;letter-spacing:0.450px;white-space:pre;-webkit-text-stroke:0.15px #24292e;">14:00</div>
<div style="position:absolute;left:721.58px;top:958.30px;line-height:14px;font-size:12px;color:#24292e;letter-spacing:0.450px;white-space:pre;-webkit-text-stroke:0.15px #24292e;">15:00</div>
<div style="position:absolute;left:833.58px;top:958.30px;line-height:14px;font-size:12px;color:#24292e;letter-spacing:0.450px;white-space:pre;-webkit-text-stroke:0.15px #24292e;">16:00</div>
<div style="position:absolute;left:944.58px;top:958.30px;line-height:14px;font-size:12px;color:#24292e;letter-spacing:0.450px;white-space:pre;-webkit-text-stroke:0.15px #24292e;">17:00</div>
<div style="position:absolute;left:317.5px;top:845px;width:0;height:0;"><div style="position:absolute;transform:translate(-50%,-50%) rotate(-90deg);white-space:pre;font-size:12px;letter-spacing:.42px;color:#24292e;line-height:14px;">Read (-) / Write (+)</div></div>
<svg style="position:absolute;left:0;top:0" width="1918" height="965"><path d="M382.0 814.4 L383.6 814.4 L385.2 814.9 L386.8 813.8 L388.4 815.0 L390.0 815.1 L391.6 814.0 L393.1 809.6 L394.7 809.6 L396.3 814.4 L397.9 814.3 L399.5 814.0 L401.1 813.4 L402.7 813.9 L404.3 814.7 L405.9 814.5 L407.5 809.6 L409.1 814.8 L410.7 813.4 L412.2 814.1 L413.8 815.0 L415.4 813.8 L417.0 815.0 L418.6 810.9 L420.2 810.4 L421.8 810.6 L423.4 810.9 L425.0 810.2 L426.6 811.0 L428.2 814.0 L429.8 814.8 L431.3 813.7 L432.9 814.8 L434.5 814.0 L436.1 814.8 L437.7 814.6 L439.3 815.0 L440.9 814.1 L442.5 813.5 L444.1 813.6 L445.7 813.6 L447.3 814.8 L448.9 814.8 L450.5 814.1 L452.0 815.1 L453.6 813.9 L455.2 814.1 L456.8 813.9 L458.4 810.5 L460.0 810.3 L461.6 810.3 L463.2 811.1 L464.8 814.8 L466.4 815.1 L468.0 815.1 L469.6 813.4 L471.1 814.4 L472.7 814.3 L474.3 813.5 L475.9 814.6 L477.5 810.3 L479.1 810.5 L480.7 810.2 L482.3 810.7 L483.9 809.8 L485.5 811.1 L487.1 810.4 L488.7 813.9 L490.2 813.9 L491.8 814.6 L493.4 813.6 L495.0 813.6 L496.6 814.5 L498.2 815.0 L499.8 813.6 L501.4 813.9 L503.0 813.7 L504.6 815.1 L506.2 814.8 L507.8 814.1 L509.4 815.2 L510.9 814.8 L512.5 814.0 L514.1 814.6 L515.7 814.4 L517.3 813.6 L518.9 814.6 L520.5 813.7 L522.1 813.5 L523.7 814.4 L525.3 814.4 L526.9 814.6 L528.5 809.6 L530.0 813.6 L531.6 810.4 L533.2 810.8 L534.8 810.1 L536.4 811.1 L538.0 811.0 L539.6 814.4 L541.2 810.8 L542.8 811.0 L544.4 811.1 L546.0 810.3 L547.6 810.6 L549.1 814.1 L550.7 813.5 L552.3 809.6 L553.9 814.3 L555.5 814.7 L557.1 814.3 L558.7 814.5 L560.3 815.0 L561.9 815.0 L563.5 813.6 L565.1 813.6 L566.7 814.4 L568.3 813.9 L569.8 813.9 L571.4 813.4 L573.0 813.8 L574.6 813.7 L576.2 814.4 L577.8 814.3 L579.4 810.6 L581.0 811.1 L582.6 810.5 L584.2 814.0 L585.8 813.4 L587.4 814.0 L588.9 814.2 L590.5 814.4 L592.1 814.2 L593.7 813.6 L595.3 813.5 L596.9 814.6 L598.5 814.7 L600.1 815.0 L601.7 811.1 L603.3 809.9 L604.9 810.5 L606.5 810.6 L608.0 810.1 L609.6 810.4 L611.2 814.3 L612.8 814.2 L614.4 813.5 L616.0 815.0 L617.6 813.6 L619.2 814.8 L620.8 809.6 L622.4 814.8 L624.0 814.6 L625.6 815.0 L627.2 814.3 L628.7 814.2 L630.3 814.4 L631.9 814.8 L633.5 814.2 L635.1 813.7 L636.7 813.7 L638.3 814.6 L639.9 813.4 L641.5 814.8 L643.1 815.0 L644.7 813.8 L646.3 814.0 L647.8 810.4 L649.4 810.7 L651.0 810.1 L652.6 810.7 L654.2 813.9 L655.8 813.4 L657.4 814.3 L659.0 810.3 L660.6 810.0 L662.2 810.5 L663.8 810.9 L665.4 811.0 L666.9 810.9 L668.5 811.0 L670.1 814.7 L671.7 814.9 L673.3 815.0 L674.9 814.6 L676.5 814.1 L678.1 810.9 L679.7 810.6 L681.3 810.2 L682.9 810.6 L684.5 814.8 L686.1 815.2 L687.6 813.9 L689.2 814.5 L690.8 813.4 L692.4 813.6 L694.0 813.7 L695.6 813.6 L697.2 813.8 L698.8 815.1 L700.4 815.4 L702.0 814.1 L703.6 814.9 L704.6 813.3 L705.4 812.5 L706.3 771.5 L707.6 812.8 L708.4 809.2 L709.6 810.4 L710.8 808.9 L711.6 812.6 L714.0 813.2 L716.6 811.4 L719.6 807.9 L721.3 804.0 L722.0 777.4 L722.7 788.2 L723.5 744.4 L724.7 759.6 L725.3 768.5 L726.5 743.9 L727.4 767.5 L728.4 794.1 L729.9 809.9 L731.4 813.8 L732.6 810.5 L734.8 805.4 L736.2 808.2 L737.2 806.4 L738.4 811.0 L740.4 809.0 L743.2 802.5 L744.6 808.6 L746.2 810.9 L748.1 814.5 L749.7 810.0 L751.3 803.8 L752.9 814.5 L754.5 813.8 L756.1 815.2 L757.7 811.3 L759.3 810.2 L760.9 814.1 L762.5 803.8 L764.1 814.6 L765.6 814.3 L767.2 813.5 L768.8 804.0 L770.4 813.8 L772.0 814.7 L773.6 814.0 L775.2 814.2 L776.8 810.7 L778.4 813.4 L780.0 811.2 L781.6 814.9 L783.2 809.9 L784.7 809.6 L786.3 814.3 L787.9 814.7 L789.5 815.0 L791.1 813.9 L792.7 809.2 L794.3 814.2 L795.9 815.0 L797.5 814.9 L799.1 814.7 L800.7 813.4 L802.3 740.4 L803.8 813.6 L805.4 809.0 L807.0 809.9 L808.6 814.4 L810.2 814.8 L811.8 809.6 L813.4 815.2 L815.0 814.0 L816.6 810.4 L818.2 813.9 L819.8 815.2 L821.4 814.3 L823.0 813.5 L824.5 814.5 L826.1 814.8 L827.7 814.6 L829.3 810.4 L830.9 814.7 L832.5 814.6 L834.1 815.0 L835.7 813.8 L837.3 813.7 L838.9 815.1 L840.5 813.6 L842.1 815.4 L843.6 814.3 L845.2 813.5 L846.8 809.9 L848.4 811.2 L850.0 813.9 L851.6 815.2 L853.2 815.1 L854.8 810.8 L856.4 813.9 L858.0 813.9 L859.6 814.7 L861.2 814.1 L862.7 814.3 L864.3 814.0 L865.9 814.6 L867.5 814.1 L869.1 813.8 L870.7 813.6 L872.3 814.1 L873.9 814.0 L875.5 814.6 L877.1 815.1 L878.7 813.4 L880.3 810.3 L881.9 814.8 L883.4 815.3 L885.0 815.2 L886.6 811.2 L888.2 814.5 L889.8 811.1 L891.4 810.8 L893.0 814.0 L894.6 810.6 L896.2 815.1 L897.8 814.8 L899.4 813.8 L901.0 814.9 L902.5 813.6 L904.1 814.3 L905.7 811.3 L907.3 813.5 L908.9 814.6 L910.5 814.4 L912.1 813.4 L913.7 810.1 L915.3 814.7 L916.9 814.0 L918.5 810.5 L920.1 814.9 L921.6 814.4 L923.2 813.4 L924.8 809.3 L926.4 815.4 L928.0 813.7 L929.6 815.2 L931.2 810.1 L932.8 814.5 L934.4 814.2 L936.0 814.8 L937.6 814.6 L939.2 815.2 L940.8 815.0 L942.3 809.2 L943.9 814.8 L945.5 815.3 L947.1 814.5 L948.7 814.7 L950.3 815.2 L951.9 814.5 L953.5 813.7 L955.1 815.4 L956.7 809.9 L958.3 808.7 L959.9 809.7 L961.4 794.4 L963.0 814.3 L964.6 814.7 L966.2 810.9 L967.8 813.9 L969.4 813.5 L971.0 814.0 L972.6 811.0 L974.2 815.2 L975.8 810.3 L977.4 813.7 L979.0 811.0 L980.5 815.2 L982.1 815.3 L983.7 814.5 L985.3 814.1 L986.9 813.8 L988.5 814.7 L990.1 815.4 L991.7 814.0 L993.3 813.8 L994.9 810.5 L996.5 814.7 L998.1 815.2 L999.7 814.4 L1001.2 813.7 L1002.8 815.1 L1004.4 813.6 L1006.0 814.7 L1007.6 815.1 L1009.2 813.4 L1010.8 814.0 L1012.4 815.0 L1014.0 811.2 L1015.6 814.9 L1017.2 814.0 L1018.8 813.5 L1020.3 808.8 L1021.9 815.1 L1023.5 814.3 L1025.1 814.3 L1026.7 813.6 L1028.3 813.8 L1029.9 815.2 L1031.5 814.8 L1033.1 814.9 L1034.7 809.9 L1036.3 810.9 L1037.9 813.4 L1039.4 814.1 L1041.0 814.1 L1042.6 814.6 L1044.2 810.9 L1045.8 810.4 L1047.4 810.0 L1049.0 814.9 L1049.0 816.3 L382.0 816.3 Z" fill="rgba(102,173,98,0.12)" stroke="none"/><path d="M382.0 814.4 L383.6 814.4 L385.2 814.9 L386.8 813.8 L388.4 815.0 L390.0 815.1 L391.6 814.0 L393.1 809.6 L394.7 809.6 L396.3 814.4 L397.9 814.3 L399.5 814.0 L401.1 813.4 L402.7 813.9 L404.3 814.7 L405.9 814.5 L407.5 809.6 L409.1 814.8 L410.7 813.4 L412.2 814.1 L413.8 815.0 L415.4 813.8 L417.0 815.0 L418.6 810.9 L420.2 810.4 L421.8 810.6 L423.4 810.9 L425.0 810.2 L426.6 811.0 L428.2 814.0 L429.8 814.8 L431.3 813.7 L432.9 814.8 L434.5 814.0 L436.1 814.8 L437.7 814.6 L439.3 815.0 L440.9 814.1 L442.5 813.5 L444.1 813.6 L445.7 813.6 L447.3 814.8 L448.9 814.8 L450.5 814.1 L452.0 815.1 L453.6 813.9 L455.2 814.1 L456.8 813.9 L458.4 810.5 L460.0 810.3 L461.6 810.3 L463.2 811.1 L464.8 814.8 L466.4 815.1 L468.0 815.1 L469.6 813.4 L471.1 814.4 L472.7 814.3 L474.3 813.5 L475.9 814.6 L477.5 810.3 L479.1 810.5 L480.7 810.2 L482.3 810.7 L483.9 809.8 L485.5 811.1 L487.1 810.4 L488.7 813.9 L490.2 813.9 L491.8 814.6 L493.4 813.6 L495.0 813.6 L496.6 814.5 L498.2 815.0 L499.8 813.6 L501.4 813.9 L503.0 813.7 L504.6 815.1 L506.2 814.8 L507.8 814.1 L509.4 815.2 L510.9 814.8 L512.5 814.0 L514.1 814.6 L515.7 814.4 L517.3 813.6 L518.9 814.6 L520.5 813.7 L522.1 813.5 L523.7 814.4 L525.3 814.4 L526.9 814.6 L528.5 809.6 L530.0 813.6 L531.6 810.4 L533.2 810.8 L534.8 810.1 L536.4 811.1 L538.0 811.0 L539.6 814.4 L541.2 810.8 L542.8 811.0 L544.4 811.1 L546.0 810.3 L547.6 810.6 L549.1 814.1 L550.7 813.5 L552.3 809.6 L553.9 814.3 L555.5 814.7 L557.1 814.3 L558.7 814.5 L560.3 815.0 L561.9 815.0 L563.5 813.6 L565.1 813.6 L566.7 814.4 L568.3 813.9 L569.8 813.9 L571.4 813.4 L573.0 813.8 L574.6 813.7 L576.2 814.4 L577.8 814.3 L579.4 810.6 L581.0 811.1 L582.6 810.5 L584.2 814.0 L585.8 813.4 L587.4 814.0 L588.9 814.2 L590.5 814.4 L592.1 814.2 L593.7 813.6 L595.3 813.5 L596.9 814.6 L598.5 814.7 L600.1 815.0 L601.7 811.1 L603.3 809.9 L604.9 810.5 L606.5 810.6 L608.0 810.1 L609.6 810.4 L611.2 814.3 L612.8 814.2 L614.4 813.5 L616.0 815.0 L617.6 813.6 L619.2 814.8 L620.8 809.6 L622.4 814.8 L624.0 814.6 L625.6 815.0 L627.2 814.3 L628.7 814.2 L630.3 814.4 L631.9 814.8 L633.5 814.2 L635.1 813.7 L636.7 813.7 L638.3 814.6 L639.9 813.4 L641.5 814.8 L643.1 815.0 L644.7 813.8 L646.3 814.0 L647.8 810.4 L649.4 810.7 L651.0 810.1 L652.6 810.7 L654.2 813.9 L655.8 813.4 L657.4 814.3 L659.0 810.3 L660.6 810.0 L662.2 810.5 L663.8 810.9 L665.4 811.0 L666.9 810.9 L668.5 811.0 L670.1 814.7 L671.7 814.9 L673.3 815.0 L674.9 814.6 L676.5 814.1 L678.1 810.9 L679.7 810.6 L681.3 810.2 L682.9 810.6 L684.5 814.8 L686.1 815.2 L687.6 813.9 L689.2 814.5 L690.8 813.4 L692.4 813.6 L694.0 813.7 L695.6 813.6 L697.2 813.8 L698.8 815.1 L700.4 815.4 L702.0 814.1 L703.6 814.9 L704.6 813.3 L705.4 812.5 L706.3 771.5 L707.6 812.8 L708.4 809.2 L709.6 810.4 L710.8 808.9 L711.6 812.6 L714.0 813.2 L716.6 811.4 L719.6 807.9 L721.3 804.0 L722.0 777.4 L722.7 788.2 L723.5 744.4 L724.7 759.6 L725.3 768.5 L726.5 743.9 L727.4 767.5 L728.4 794.1 L729.9 809.9 L731.4 813.8 L732.6 810.5 L734.8 805.4 L736.2 808.2 L737.2 806.4 L738.4 811.0 L740.4 809.0 L743.2 802.5 L744.6 808.6 L746.2 810.9 L748.1 814.5 L749.7 810.0 L751.3 803.8 L752.9 814.5 L754.5 813.8 L756.1 815.2 L757.7 811.3 L759.3 810.2 L760.9 814.1 L762.5 803.8 L764.1 814.6 L765.6 814.3 L767.2 813.5 L768.8 804.0 L770.4 813.8 L772.0 814.7 L773.6 814.0 L775.2 814.2 L776.8 810.7 L778.4 813.4 L780.0 811.2 L781.6 814.9 L783.2 809.9 L784.7 809.6 L786.3 814.3 L787.9 814.7 L789.5 815.0 L791.1 813.9 L792.7 809.2 L794.3 814.2 L795.9 815.0 L797.5 814.9 L799.1 814.7 L800.7 813.4 L802.3 740.4 L803.8 813.6 L805.4 809.0 L807.0 809.9 L808.6 814.4 L810.2 814.8 L811.8 809.6 L813.4 815.2 L815.0 814.0 L816.6 810.4 L818.2 813.9 L819.8 815.2 L821.4 814.3 L823.0 813.5 L824.5 814.5 L826.1 814.8 L827.7 814.6 L829.3 810.4 L830.9 814.7 L832.5 814.6 L834.1 815.0 L835.7 813.8 L837.3 813.7 L838.9 815.1 L840.5 813.6 L842.1 815.4 L843.6 814.3 L845.2 813.5 L846.8 809.9 L848.4 811.2 L850.0 813.9 L851.6 815.2 L853.2 815.1 L854.8 810.8 L856.4 813.9 L858.0 813.9 L859.6 814.7 L861.2 814.1 L862.7 814.3 L864.3 814.0 L865.9 814.6 L867.5 814.1 L869.1 813.8 L870.7 813.6 L872.3 814.1 L873.9 814.0 L875.5 814.6 L877.1 815.1 L878.7 813.4 L880.3 810.3 L881.9 814.8 L883.4 815.3 L885.0 815.2 L886.6 811.2 L888.2 814.5 L889.8 811.1 L891.4 810.8 L893.0 814.0 L894.6 810.6 L896.2 815.1 L897.8 814.8 L899.4 813.8 L901.0 814.9 L902.5 813.6 L904.1 814.3 L905.7 811.3 L907.3 813.5 L908.9 814.6 L910.5 814.4 L912.1 813.4 L913.7 810.1 L915.3 814.7 L916.9 814.0 L918.5 810.5 L920.1 814.9 L921.6 814.4 L923.2 813.4 L924.8 809.3 L926.4 815.4 L928.0 813.7 L929.6 815.2 L931.2 810.1 L932.8 814.5 L934.4 814.2 L936.0 814.8 L937.6 814.6 L939.2 815.2 L940.8 815.0 L942.3 809.2 L943.9 814.8 L945.5 815.3 L947.1 814.5 L948.7 814.7 L950.3 815.2 L951.9 814.5 L953.5 813.7 L955.1 815.4 L956.7 809.9 L958.3 808.7 L959.9 809.7 L961.4 794.4 L963.0 814.3 L964.6 814.7 L966.2 810.9 L967.8 813.9 L969.4 813.5 L971.0 814.0 L972.6 811.0 L974.2 815.2 L975.8 810.3 L977.4 813.7 L979.0 811.0 L980.5 815.2 L982.1 815.3 L983.7 814.5 L985.3 814.1 L986.9 813.8 L988.5 814.7 L990.1 815.4 L991.7 814.0 L993.3 813.8 L994.9 810.5 L996.5 814.7 L998.1 815.2 L999.7 814.4 L1001.2 813.7 L1002.8 815.1 L1004.4 813.6 L1006.0 814.7 L1007.6 815.1 L1009.2 813.4 L1010.8 814.0 L1012.4 815.0 L1014.0 811.2 L1015.6 814.9 L1017.2 814.0 L1018.8 813.5 L1020.3 808.8 L1021.9 815.1 L1023.5 814.3 L1025.1 814.3 L1026.7 813.6 L1028.3 813.8 L1029.9 815.2 L1031.5 814.8 L1033.1 814.9 L1034.7 809.9 L1036.3 810.9 L1037.9 813.4 L1039.4 814.1 L1041.0 814.1 L1042.6 814.6 L1044.2 810.9 L1045.8 810.4 L1047.4 810.0 L1049.0 814.9" fill="none" stroke="#5fa85d" stroke-width="1.05" stroke-linejoin="round" opacity="1"/><path d="M382.0 816.6 L699.6 816.6 L700.6 827.8 L701.4 938.7 L702.3 823.3 L703.4 816.6 L726.8 816.6 L727.8 832.2 L728.5 872.0 L729.6 827.8 L730.8 816.6 L876.3 816.6 L877.3 826.0 L878.3 817.7 L880.5 818.2 L881.5 816.6 L1049.0 816.6" fill="none" stroke="#efaa40" stroke-width="1.0" stroke-linejoin="round" opacity="1"/></svg>
<svg style="position:absolute;left:0;top:0" width="1918" height="965"><rect x="1083.50" y="676.75" width="772.50" height="299.00" rx="2.5" fill="#fff" stroke="#e2e4e5" stroke-width="1"/></svg>
<div style="position:absolute;left:1435.25px;top:685.00px;line-height:16px;font-size:14px;color:#24292e;letter-spacing:0.576px;white-space:pre;-webkit-text-stroke:0.35px #24292e;">In-/Egress</div>
<svg style="position:absolute;left:0;top:0" width="1918" height="965" shape-rendering="crispEdges"><path d="M1170 727.5 H1830.5" stroke="rgba(36,41,46,0.09)" stroke-width="1"/><path d="M1170 767.5 H1830.5" stroke="rgba(36,41,46,0.09)" stroke-width="1"/><path d="M1170 808.5 H1830.5" stroke="rgba(36,41,46,0.09)" stroke-width="1"/><path d="M1170 849.5 H1830.5" stroke="rgba(36,41,46,0.09)" stroke-width="1"/><path d="M1170 889.5 H1830.5" stroke="rgba(36,41,46,0.09)" stroke-width="1"/><path d="M1170 930.5 H1830.5" stroke="rgba(36,41,46,0.09)" stroke-width="1"/><path d="M1191.5 727.5 V966" stroke="rgba(36,41,46,0.09)" stroke-width="1"/><path d="M1301.5 727.5 V966" stroke="rgba(36,41,46,0.09)" stroke-width="1"/><path d="M1412.5 727.5 V966" stroke="rgba(36,41,46,0.09)" stroke-width="1"/><path d="M1522.5 727.5 V966" stroke="rgba(36,41,46,0.09)" stroke-width="1"/><path d="M1632.5 727.5 V966" stroke="rgba(36,41,46,0.09)" stroke-width="1"/><path d="M1743.5 727.5 V966" stroke="rgba(36,41,46,0.09)" stroke-width="1"/></svg>
<div style="position:absolute;left:1117.88px;top:720.00px;line-height:14px;font-size:12px;color:#24292e;letter-spacing:0.350px;white-space:pre;-webkit-text-stroke:0.15px #24292e;">20 MB/s</div>
<div style="position:absolute;left:1117.88px;top:760.00px;line-height:14px;font-size:12px;color:#24292e;letter-spacing:0.350px;white-space:pre;-webkit-text-stroke:0.15px #24292e;">15 MB/s</div>
<div style="position:absolute;left:1117.88px;top:801.00px;line-height:14px;font-size:12px;color:#24292e;letter-spacing:0.350px;white-space:pre;-webkit-text-stroke:0.15px #24292e;">10 MB/s</div>
<div style="position:absolute;left:1124.91px;top:842.00px;line-height:14px;font-size:12px;color:#24292e;letter-spacing:0.350px;white-space:pre;-webkit-text-stroke:0.15px #24292e;">5 MB/s</div>
<div style="position:absolute;left:1135.24px;top:882.00px;line-height:14px;font-size:12px;color:#24292e;letter-spacing:0.350px;white-space:pre;-webkit-text-stroke:0.15px #24292e;">0 B/s</div>
<div style="position:absolute;left:1120.56px;top:923.00px;line-height:14px;font-size:12px;color:#24292e;letter-spacing:0.350px;white-space:pre;-webkit-text-stroke:0.15px #24292e;">-5 MB/s</div>
<div style="position:absolute;left:1100px;top:855.5px;width:0;height:0;"><div style="position:absolute;transform:translate(-50%,-50%) rotate(-90deg);white-space:pre;font-size:12px;letter-spacing:.42px;color:#24292e;line-height:14px;">Egress (-) / Ingress (+)</div></div>
<svg style="position:absolute;left:0;top:0" width="1918" height="965"><path d="M1170.0 889.5 L1183.6 889.5 L1184.9 887.5 L1186.2 889.5 L1192.2 889.5 L1193.2 878.2 L1194.4 880.0 L1195.4 889.5 L1210.3 889.5 L1211.5 886.4 L1212.8 889.5 L1240.0 889.5 L1241.0 888.4 L1242.0 889.5 L1259.2 889.5 L1260.2 885.2 L1261.2 889.5 L1291.4 889.5 L1292.6 885.0 L1294.0 889.5 L1336.5 889.5 L1337.0 888.6 L1337.6 889.5 L1382.2 889.5 L1382.8 866.0 L1383.4 860.8 L1384.4 937.7 L1385.6 900.0 L1386.4 889.5 L1458.0 889.5 L1459.3 845.3 L1461.6 923.0 L1463.2 889.5 L1464.4 884.7 L1467.0 807.5 L1468.3 880.8 L1468.9 862.6 L1470.7 968.0 L1471.7 801.8 L1474.0 962.3 L1476.1 889.5 L1486.2 889.5 L1488.3 786.2 L1490.3 875.6 L1491.6 878.2 L1493.5 887.2 L1496.0 888.8 L1499.0 887.6 L1502.0 888.4 L1505.1 888.0 L1507.2 840.6 L1510.3 829.0 L1512.9 825.1 L1513.9 733.9 L1514.9 820.0 L1516.0 888.0 L1518.0 888.6 L1521.0 888.8 L1527.9 889.5 L1529.5 920.4 L1531.0 889.5 L1540.0 888.6 L1543.0 889.5 L1586.2 889.5 L1587.5 920.9 L1588.8 889.5 L1600.0 888.9 L1640.0 889.5 L1641.0 888.6 L1642.0 889.5 L1700.0 889.5 L1701.0 888.7 L1702.0 889.5 L1760.0 889.5 L1761.0 888.7 L1762.0 889.5 L1800.0 889.5 L1801.0 888.7 L1802.0 889.5 L1830.5 889.5 L1830.5 889.5 L1170.0 889.5 Z" fill="rgba(102,173,98,0.12)" stroke="none"/><path d="M1170.0 889.5 L1183.6 889.5 L1184.9 887.5 L1186.2 889.5 L1192.2 889.5 L1193.2 878.2 L1194.4 880.0 L1195.4 889.5 L1210.3 889.5 L1211.5 886.4 L1212.8 889.5 L1240.0 889.5 L1241.0 888.4 L1242.0 889.5 L1259.2 889.5 L1260.2 885.2 L1261.2 889.5 L1291.4 889.5 L1292.6 885.0 L1294.0 889.5 L1336.5 889.5 L1337.0 888.6 L1337.6 889.5 L1382.2 889.5 L1382.8 866.0 L1383.4 860.8 L1384.4 937.7 L1385.6 900.0 L1386.4 889.5 L1458.0 889.5 L1459.3 845.3 L1461.6 923.0 L1463.2 889.5 L1464.4 884.7 L1467.0 807.5 L1468.3 880.8 L1468.9 862.6 L1470.7 968.0 L1471.7 801.8 L1474.0 962.3 L1476.1 889.5 L1486.2 889.5 L1488.3 786.2 L1490.3 875.6 L1491.6 878.2 L1493.5 887.2 L1496.0 888.8 L1499.0 887.6 L1502.0 888.4 L1505.1 888.0 L1507.2 840.6 L1510.3 829.0 L1512.9 825.1 L1513.9 733.9 L1514.9 820.0 L1516.0 888.0 L1518.0 888.6 L1521.0 888.8 L1527.9 889.5 L1529.5 920.4 L1531.0 889.5 L1540.0 888.6 L1543.0 889.5 L1586.2 889.5 L1587.5 920.9 L1588.8 889.5 L1600.0 888.9 L1640.0 889.5 L1641.0 888.6 L1642.0 889.5 L1700.0 889.5 L1701.0 888.7 L1702.0 889.5 L1760.0 889.5 L1761.0 888.7 L1762.0 889.5 L1800.0 889.5 L1801.0 888.7 L1802.0 889.5 L1830.5 889.5" fill="none" stroke="#5fa85d" stroke-width="1.05" stroke-linejoin="round" opacity="1"/></svg>
</div></body></html>
